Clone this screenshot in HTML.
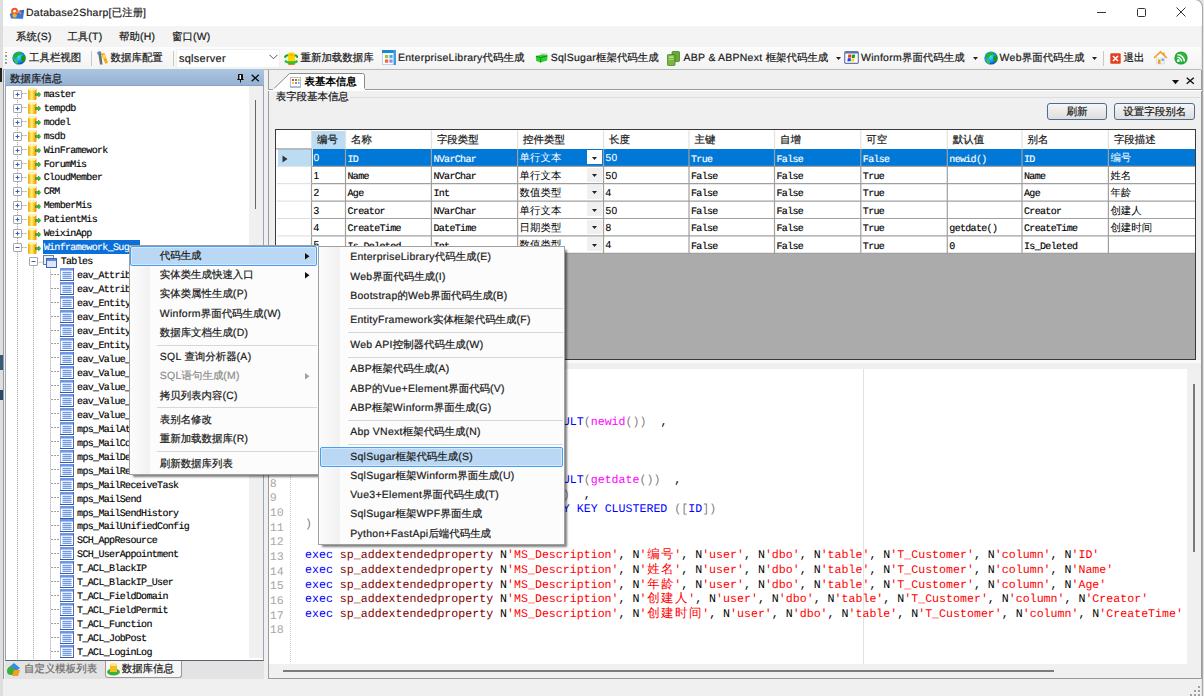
<!DOCTYPE html><html><head><meta charset="utf-8"><style>
html,body{margin:0;padding:0;}
body{width:1204px;height:696px;overflow:hidden;position:relative;background:#f0f0f0;font-family:"Liberation Sans",sans-serif;text-rendering:geometricPrecision;-webkit-text-stroke:0.2px currentColor;}
div,svg{position:absolute;box-sizing:border-box;}
</style></head><body>
<div style="left:0px;top:0px;width:3px;height:696px;background:#dedede;"></div>
<div style="left:2.5px;top:0px;width:1.2000000000000002px;height:696px;background:#9a9a9a;"></div>
<div style="left:0px;top:355px;width:2.5px;height:15px;background:#3a5a7a;"></div>
<div style="left:0px;top:390px;width:2.5px;height:10px;background:#2a4a6a;"></div>
<div style="left:0px;top:68px;width:2px;height:14px;background:#222;"></div>
<div style="left:1201px;top:0px;width:3px;height:696px;background:#e4e4e4;"></div>
<div style="left:3px;top:0px;width:1199px;height:26px;background:#fff;border-top-right-radius:8px;"></div>
<svg style="left:9px;top:7px" width="16" height="13" viewBox="0 0 16 13"><path d="M0.8 6.6 L5 6 L11 3.2 L15.2 2.8 L14 11.8 L2 11.4 Z" fill="#2a6ad8"/><path d="M2 7.5 L13.8 6 L13.4 11 L2.6 11Z" fill="#3a80e8" opacity="0.6"/><circle cx="5.6" cy="4.2" r="2.5" fill="none" stroke="#f45424" stroke-width="2"/><path d="M7 5.2 Q10.5 3.8 12 6.8" stroke="#f58a30" stroke-width="2" fill="none"/><circle cx="5.6" cy="8.6" r="2.2" fill="#f0b020"/></svg>
<div style="left:26px;top:7.0px;height:14px;line-height:14px;font-size:10.44px;font-family:'Liberation Sans', sans-serif;color:#1a1a1a;white-space:nowrap;"><span style="letter-spacing:0.3px">Database2Sharp[</span>已注册<span style="letter-spacing:0.3px">]</span></div>
<div style="left:1097px;top:11.5px;width:9px;height:1.0px;background:#333;"></div>
<div style="left:1137px;top:7.5px;width:9px;height:9.0px;border:1px solid #333;border-radius:1.5px;"></div>
<svg style="left:1176px;top:7px" width="10" height="10" viewBox="0 0 10 10"><path d="M0.5 0.5 L9.5 9.5 M9.5 0.5 L0.5 9.5" stroke="#333" stroke-width="1"/></svg>
<div style="left:3px;top:26px;width:1198px;height:21px;background:#f4f4f4;"></div>
<div style="left:16px;top:31.299999999999997px;height:14px;line-height:14px;font-size:10.44px;font-family:'Liberation Sans', sans-serif;color:#1a1a1a;white-space:nowrap;">系统<span style="letter-spacing:0.3px">(S)</span></div>
<div style="left:67.4px;top:31.299999999999997px;height:14px;line-height:14px;font-size:10.44px;font-family:'Liberation Sans', sans-serif;color:#1a1a1a;white-space:nowrap;">工具<span style="letter-spacing:0.3px">(T)</span></div>
<div style="left:119px;top:31.299999999999997px;height:14px;line-height:14px;font-size:10.44px;font-family:'Liberation Sans', sans-serif;color:#1a1a1a;white-space:nowrap;">帮助<span style="letter-spacing:0.3px">(H)</span></div>
<div style="left:172px;top:31.299999999999997px;height:14px;line-height:14px;font-size:10.44px;font-family:'Liberation Sans', sans-serif;color:#1a1a1a;white-space:nowrap;">窗口<span style="letter-spacing:0.3px">(W)</span></div>
<div style="left:3px;top:47px;width:1198px;height:22.5px;background:linear-gradient(#fcfcfc,#f3f3f3);border-bottom:1px solid #b9b9b9;"></div>
<div style="left:5px;top:51.5px;width:2px;height:1.6000000000000014px;background:#9a9a9a;"></div>
<div style="left:5px;top:55px;width:2px;height:1.6000000000000014px;background:#9a9a9a;"></div>
<div style="left:5px;top:58.5px;width:2px;height:1.6000000000000014px;background:#9a9a9a;"></div>
<div style="left:5px;top:62px;width:2px;height:1.6000000000000014px;background:#9a9a9a;"></div>
<svg style="left:12px;top:51px" width="14" height="14" viewBox="0 0 14 14"><defs><radialGradient id="gb1" cx="0.45" cy="0.4" r="0.65"><stop offset="0" stop-color="#40e4ff"/><stop offset="0.55" stop-color="#1a96f0"/><stop offset="1" stop-color="#0c2cc8"/></radialGradient></defs><circle cx="7" cy="7" r="6.6" fill="url(#gb1)"/><path d="M2.6 3 Q6 0.2 10.2 1.6 L9.4 3.8 L6.4 4.6 L4.4 7.6 L1.2 6.6 Q1.2 4.6 2.6 3Z" fill="#22b422"/><path d="M9.6 5 L13.2 4.2 Q14 7 13.2 10.2 L10.6 11.2 L9 8.2Z" fill="#159a15"/><path d="M1.2 8 L4 8.4 L6.2 11.2 L5.2 13.4 Q2.2 11.8 1.2 8Z" fill="#34cc34"/></svg>
<div style="left:29px;top:52.0px;height:14px;line-height:14px;font-size:10.44px;font-family:'Liberation Sans', sans-serif;color:#1a1a1a;white-space:nowrap;">工具栏视图</div>
<div style="left:90.5px;top:51px;width:1.0px;height:15px;background:#c8c8c8;"></div>
<svg style="left:96px;top:50px" width="13" height="16" viewBox="0 0 13 16"><path d="M2 2 L5 1.5 L6.5 14.5 L4 14.5Z" fill="#6a7078"/><path d="M1 2.5 L3.5 1 L4.5 4 L2 5Z" fill="#5a8ac0"/><path d="M5 3.5 L8.5 3 L12 12.5 L9.5 14 Z" fill="#f4a818"/><path d="M6.5 5 L9 4.8 L10 8 L7.5 8.5Z" fill="#ffe040"/></svg>
<div style="left:110.6px;top:52.0px;height:14px;line-height:14px;font-size:10.44px;font-family:'Liberation Sans', sans-serif;color:#1a1a1a;white-space:nowrap;">数据库配置</div>
<div style="left:173px;top:51px;width:1px;height:15px;background:#c8c8c8;"></div>
<div style="left:176.3px;top:48.7px;width:103.5px;height:19.299999999999997px;background:#fff;border:1px solid #f0f0f0;"></div>
<div style="left:179px;top:52.0px;height:14px;line-height:14px;font-size:10.9px;font-family:'Liberation Sans', sans-serif;color:#1a1a1a;white-space:nowrap;"><span style="letter-spacing:0.3px">sqlserver</span></div>
<svg style="left:269px;top:54px" width="9" height="6" viewBox="0 0 9 6"><path d="M0.5 0.8 L4.5 4.8 L8.5 0.8" stroke="#555" stroke-width="1" fill="none"/></svg>
<svg style="left:284px;top:51px" width="14" height="15" viewBox="0 0 14 15"><rect x="4" y="1.5" width="7" height="10" rx="1.8" fill="#ffd400"/><rect x="5.5" y="3.5" width="4" height="1" fill="#f09020"/><rect x="4" y="10.5" width="7" height="3.5" rx="1" fill="#e8801a"/><path d="M0.8 6.8 Q1.5 4 4.2 4.2" stroke="#18a818" stroke-width="2" fill="none"/><path d="M10.8 4.2 Q13.4 4.6 13.6 7" stroke="#18a818" stroke-width="2" fill="none"/><path d="M0.8 10 Q7 13.6 13.6 10" stroke="#2ec02e" stroke-width="2.4" fill="none"/></svg>
<div style="left:300.5px;top:52.0px;height:14px;line-height:14px;font-size:10.44px;font-family:'Liberation Sans', sans-serif;color:#1a1a1a;white-space:nowrap;">重新加载数据库</div>
<svg style="left:382px;top:50px" width="14" height="15" viewBox="0 0 14 15"><rect x="0.5" y="0.5" width="13" height="14" fill="#fafcff" stroke="#b8c8d8" stroke-width="0.8"/><rect x="0" y="0" width="14" height="3" fill="#1a8ad8"/><rect x="11.5" y="0" width="2.5" height="15" fill="#3aa0e0"/><rect x="3" y="5" width="3.2" height="3.2" fill="#9ac838"/><rect x="7.4" y="5" width="3.2" height="3.2" fill="#40b0f0"/><rect x="3" y="9.5" width="3.2" height="3.2" fill="#f86030"/><rect x="7.4" y="9.5" width="3.2" height="3.2" fill="#a080f8"/></svg>
<div style="left:398px;top:52.0px;height:14px;line-height:14px;font-size:10.44px;font-family:'Liberation Sans', sans-serif;color:#1a1a1a;white-space:nowrap;"><span style="letter-spacing:0.3px">EnterpriseLibrary</span>代码生成</div>
<svg style="left:535px;top:52px" width="13" height="11" viewBox="0 0 13 11"><path d="M5 1.5 L12 1.2 L12.5 3 L6 3.5Z" fill="#c8d0e8"/><path d="M0.8 4 L8 2.6 L12.5 3.6 L12.2 8.6 L5.6 10.6 L1.2 9Z" fill="#2ed02e"/><path d="M1 4.2 L5.6 5.6 L12.4 3.8" stroke="#0a8a0a" stroke-width="1" fill="none"/><path d="M5.6 5.6 L5.6 10.5" stroke="#0a9a0a" stroke-width="1"/></svg>
<div style="left:550.7px;top:52.0px;height:14px;line-height:14px;font-size:10.44px;font-family:'Liberation Sans', sans-serif;color:#1a1a1a;white-space:nowrap;"><span style="letter-spacing:0.3px">SqlSugar</span>框架代码生成</div>
<svg style="left:667px;top:51px" width="13" height="15" viewBox="0 0 13 15"><rect x="5" y="0.5" width="7.5" height="10" rx="0.8" fill="#6aa838" stroke="#3e7a18" stroke-width="0.7"/><rect x="0.5" y="3.5" width="7.5" height="11" rx="0.8" fill="#78b840" stroke="#3e7a18" stroke-width="0.7"/><rect x="2" y="5.5" width="4.5" height="1.2" fill="#d8ecc0"/><rect x="2" y="8" width="4.5" height="1" fill="#a8d088"/></svg>
<div style="left:683.6px;top:52.0px;height:14px;line-height:14px;font-size:10.44px;font-family:'Liberation Sans', sans-serif;color:#1a1a1a;white-space:nowrap;"><span style="letter-spacing:0.3px">ABP </span>&amp;<span style="letter-spacing:0.3px"> ABPNext </span>框架代码生成</div>
<svg style="left:836px;top:57px" width="5" height="3" viewBox="0 0 5 3"><path d="M0 0 L5 0 L2.5 3Z" fill="#222"/></svg>
<svg style="left:844px;top:51px" width="15" height="13" viewBox="0 0 15 13"><rect x="0.7" y="0.7" width="13.6" height="11.6" rx="1" fill="#fbfcff" stroke="#6a78a8" stroke-width="1.2"/><rect x="1" y="1" width="13" height="1.5" fill="#5a70b0"/><path d="M4.4 3.6 L7.4 3.4 L7 6.6 L4 6.8Z" fill="#f03a10"/><path d="M8 3.8 L11.2 3.6 L10.6 7 L7.6 7Z" fill="#10a020"/><path d="M3.8 7.2 L7 7.2 L6.6 10.2 L3.4 10.2Z" fill="#1040f0"/><path d="M7.6 7.4 L10.6 7.4 L10 10.6 L7 10.4Z" fill="#ffd800"/></svg>
<div style="left:861px;top:52.0px;height:14px;line-height:14px;font-size:10.44px;font-family:'Liberation Sans', sans-serif;color:#1a1a1a;white-space:nowrap;"><span style="letter-spacing:0.3px">Winform</span>界面代码生成</div>
<svg style="left:973px;top:57px" width="5" height="3" viewBox="0 0 5 3"><path d="M0 0 L5 0 L2.5 3Z" fill="#222"/></svg>
<svg style="left:984px;top:51px" width="14" height="14" viewBox="0 0 14 14"><defs><radialGradient id="gb2" cx="0.45" cy="0.4" r="0.65"><stop offset="0" stop-color="#40e4ff"/><stop offset="0.55" stop-color="#1a96f0"/><stop offset="1" stop-color="#0c2cc8"/></radialGradient></defs><circle cx="7" cy="7" r="6.6" fill="url(#gb2)"/><path d="M2.6 3 Q6 0.2 10.2 1.6 L9.4 3.8 L6.4 4.6 L4.4 7.6 L1.2 6.6 Q1.2 4.6 2.6 3Z" fill="#22b422"/><path d="M9.6 5 L13.2 4.2 Q14 7 13.2 10.2 L10.6 11.2 L9 8.2Z" fill="#159a15"/><path d="M1.2 8 L4 8.4 L6.2 11.2 L5.2 13.4 Q2.2 11.8 1.2 8Z" fill="#34cc34"/></svg>
<div style="left:999.6px;top:52.0px;height:14px;line-height:14px;font-size:10.44px;font-family:'Liberation Sans', sans-serif;color:#1a1a1a;white-space:nowrap;"><span style="letter-spacing:0.3px">Web</span>界面代码生成</div>
<svg style="left:1092px;top:57px" width="5" height="3" viewBox="0 0 5 3"><path d="M0 0 L5 0 L2.5 3Z" fill="#222"/></svg>
<div style="left:1103px;top:51px;width:1px;height:15px;background:#c8c8c8;"></div>
<svg style="left:1110px;top:53px" width="11" height="11" viewBox="0 0 11 11"><rect x="0.3" y="0.3" width="10.4" height="10.4" rx="1.2" fill="#e24020"/><path d="M3 3 L8 8 M8 3 L3 8" stroke="#fff" stroke-width="1.6"/></svg>
<div style="left:1123.6px;top:52.0px;height:14px;line-height:14px;font-size:10.44px;font-family:'Liberation Sans', sans-serif;color:#1a1a1a;white-space:nowrap;">退出</div>
<svg style="left:1153px;top:50px" width="15" height="15" viewBox="0 0 15 15"><path d="M3.5 7 L3.5 13.8 L11.5 13.8 L11.5 7" fill="#f0f0f0" stroke="#d8d8d8" stroke-width="0.8"/><path d="M1 8 L7.5 1.8 L14 8" stroke="#f0a020" stroke-width="1.6" fill="none"/><rect x="10.2" y="2.5" width="1.5" height="3" fill="#f0a020"/><rect x="5" y="9.5" width="2.5" height="4.3" fill="#f0a020"/><rect x="8.6" y="8.6" width="2.2" height="2.2" fill="#40b0f8"/></svg>
<svg style="left:1174px;top:51px" width="14" height="14" viewBox="0 0 14 14"><circle cx="7" cy="7" r="6.6" fill="#24a83a"/><circle cx="7" cy="6.5" r="5" fill="#36c04a" opacity="0.6"/><circle cx="4.3" cy="9.7" r="1.4" fill="#fff"/><path d="M3.4 6.4 A4.2 4.2 0 0 1 7.6 10.6 M3.4 3.6 A7 7 0 0 1 10.4 10.6" stroke="#fff" stroke-width="1.4" fill="none"/></svg>
<div style="left:5px;top:69px;width:259px;height:16.5px;background:linear-gradient(#abc5e1,#97b2d2);border-bottom:1px solid #87a2c4;"></div>
<div style="left:10px;top:72.5px;height:14px;line-height:14px;font-size:10.44px;font-family:'Liberation Sans', sans-serif;color:#1a1a1a;white-space:nowrap;">数据库信息</div>
<svg style="left:237px;top:74px" width="7" height="9" viewBox="0 0 7 9"><path d="M1.5 0.5 L5.5 0.5 L5.5 5 L6.5 5.5 L0.5 5.5 L1.5 5Z M3.5 5.5 L3.5 8.5" stroke="#111" stroke-width="1" fill="#111"/><rect x="2.5" y="1" width="1.5" height="4" fill="#fff"/></svg>
<svg style="left:251px;top:74px" width="8.5" height="8" viewBox="0 0 8.5 8"><path d="M0.7 0.7 L7.8 7.3 M7.8 0.7 L0.7 7.3" stroke="#111" stroke-width="1.4"/></svg>
<div style="left:5px;top:85.5px;width:259px;height:575.7px;background:#fff;border:1px solid #9aa4b4;border-top:none;border-bottom:1.6px solid #5c6270;"></div>
<div style="left:249px;top:86px;width:14px;height:572px;background:#f0f0f0;"></div>
<div style="left:254.8px;top:99.5px;width:1.3999999999999773px;height:109.0px;background:#666;"></div>
<svg style="left:0;top:0" width="264" height="660">
<path d="M17.5 94.2 V 659" stroke="#a0a0a0" stroke-width="1" stroke-dasharray="1 1"/>
<path d="M33.5 261.72 V 659" stroke="#a0a0a0" stroke-width="1" stroke-dasharray="1 1"/>
<path d="M50.5 269.68 V 659" stroke="#a0a0a0" stroke-width="1" stroke-dasharray="1 1"/>
<path d="M21.5 93.5 H 27" stroke="#a8a8a8" stroke-width="1" stroke-dasharray="2 1"/>
<path d="M21.5 107.5 H 27" stroke="#a8a8a8" stroke-width="1" stroke-dasharray="2 1"/>
<path d="M21.5 121.5 H 27" stroke="#a8a8a8" stroke-width="1" stroke-dasharray="2 1"/>
<path d="M21.5 135.5 H 27" stroke="#a8a8a8" stroke-width="1" stroke-dasharray="2 1"/>
<path d="M21.5 149.5 H 27" stroke="#a8a8a8" stroke-width="1" stroke-dasharray="2 1"/>
<path d="M21.5 163.5 H 27" stroke="#a8a8a8" stroke-width="1" stroke-dasharray="2 1"/>
<path d="M21.5 177.5 H 27" stroke="#a8a8a8" stroke-width="1" stroke-dasharray="2 1"/>
<path d="M21.5 191.5 H 27" stroke="#a8a8a8" stroke-width="1" stroke-dasharray="2 1"/>
<path d="M21.5 205.5 H 27" stroke="#a8a8a8" stroke-width="1" stroke-dasharray="2 1"/>
<path d="M21.5 219.5 H 27" stroke="#a8a8a8" stroke-width="1" stroke-dasharray="2 1"/>
<path d="M21.5 233.5 H 27" stroke="#a8a8a8" stroke-width="1" stroke-dasharray="2 1"/>
<path d="M21.5 247.5 H 27" stroke="#a8a8a8" stroke-width="1" stroke-dasharray="2 1"/>
<path d="M37.5 262.22 H 43" stroke="#a0a0a0" stroke-width="1" stroke-dasharray="1 1"/>
<path d="M51 274.5 H 59" stroke="#a0a0a0" stroke-width="1" stroke-dasharray="2 1"/>
<path d="M51 288.5 H 59" stroke="#a0a0a0" stroke-width="1" stroke-dasharray="2 1"/>
<path d="M51 302.5 H 59" stroke="#a0a0a0" stroke-width="1" stroke-dasharray="2 1"/>
<path d="M51 316.5 H 59" stroke="#a0a0a0" stroke-width="1" stroke-dasharray="2 1"/>
<path d="M51 330.5 H 59" stroke="#a0a0a0" stroke-width="1" stroke-dasharray="2 1"/>
<path d="M51 343.5 H 59" stroke="#a0a0a0" stroke-width="1" stroke-dasharray="2 1"/>
<path d="M51 357.5 H 59" stroke="#a0a0a0" stroke-width="1" stroke-dasharray="2 1"/>
<path d="M51 371.5 H 59" stroke="#a0a0a0" stroke-width="1" stroke-dasharray="2 1"/>
<path d="M51 385.5 H 59" stroke="#a0a0a0" stroke-width="1" stroke-dasharray="2 1"/>
<path d="M51 399.5 H 59" stroke="#a0a0a0" stroke-width="1" stroke-dasharray="2 1"/>
<path d="M51 413.5 H 59" stroke="#a0a0a0" stroke-width="1" stroke-dasharray="2 1"/>
<path d="M51 427.5 H 59" stroke="#a0a0a0" stroke-width="1" stroke-dasharray="2 1"/>
<path d="M51 441.5 H 59" stroke="#a0a0a0" stroke-width="1" stroke-dasharray="2 1"/>
<path d="M51 455.5 H 59" stroke="#a0a0a0" stroke-width="1" stroke-dasharray="2 1"/>
<path d="M51 469.5 H 59" stroke="#a0a0a0" stroke-width="1" stroke-dasharray="2 1"/>
<path d="M51 483.5 H 59" stroke="#a0a0a0" stroke-width="1" stroke-dasharray="2 1"/>
<path d="M51 497.5 H 59" stroke="#a0a0a0" stroke-width="1" stroke-dasharray="2 1"/>
<path d="M51 511.5 H 59" stroke="#a0a0a0" stroke-width="1" stroke-dasharray="2 1"/>
<path d="M51 525.5 H 59" stroke="#a0a0a0" stroke-width="1" stroke-dasharray="2 1"/>
<path d="M51 539.5 H 59" stroke="#a0a0a0" stroke-width="1" stroke-dasharray="2 1"/>
<path d="M51 553.5 H 59" stroke="#a0a0a0" stroke-width="1" stroke-dasharray="2 1"/>
<path d="M51 567.5 H 59" stroke="#a0a0a0" stroke-width="1" stroke-dasharray="2 1"/>
<path d="M51 581.5 H 59" stroke="#a0a0a0" stroke-width="1" stroke-dasharray="2 1"/>
<path d="M51 595.5 H 59" stroke="#a0a0a0" stroke-width="1" stroke-dasharray="2 1"/>
<path d="M51 609.5 H 59" stroke="#a0a0a0" stroke-width="1" stroke-dasharray="2 1"/>
<path d="M51 623.5 H 59" stroke="#a0a0a0" stroke-width="1" stroke-dasharray="2 1"/>
<path d="M51 637.5 H 59" stroke="#a0a0a0" stroke-width="1" stroke-dasharray="2 1"/>
<path d="M51 651.5 H 59" stroke="#a0a0a0" stroke-width="1" stroke-dasharray="2 1"/>
</svg>
<svg style="left:13px;top:90px" width="9" height="9" viewBox="0 0 9 9"><rect x="0.5" y="0.5" width="8" height="8" rx="0.5" fill="#fff" stroke="#a8a8a8" stroke-width="1"/><path d="M2.5 4.5 L6.5 4.5" stroke="#3a5fb0" stroke-width="1"/><path d="M4.5 2.5 L4.5 6.5" stroke="#3a5fb0" stroke-width="1"/></svg>
<svg style="left:27px;top:87px" width="14" height="14" viewBox="0 0 14 14"><defs><linearGradient id="gy" x1="0" x2="1"><stop offset="0" stop-color="#f0a800"/><stop offset="0.45" stop-color="#fff080"/><stop offset="0.7" stop-color="#f8c020"/><stop offset="1" stop-color="#e88800"/></linearGradient></defs><rect x="1" y="1.5" width="8.5" height="11.5" rx="1" fill="url(#gy)"/><ellipse cx="5.25" cy="2" rx="4.25" ry="1.5" fill="#fff2b0"/><path d="M8.5 6.5 L11.5 6.5 L11.5 5 L13.8 7.5 L11.5 10 L11.5 8.5 L8.5 8.5Z" fill="#3ab83a" stroke="#1e7e1e" stroke-width="0.5"/></svg>
<div style="left:43.7px;top:88.7px;height:14px;line-height:14px;font-size:10.0px;font-family:'Liberation Mono', monospace;color:#000;white-space:nowrap;letter-spacing:-0.67px;-webkit-text-stroke:0.15px currentColor;">master</div>
<svg style="left:13px;top:104px" width="9" height="9" viewBox="0 0 9 9"><rect x="0.5" y="0.5" width="8" height="8" rx="0.5" fill="#fff" stroke="#a8a8a8" stroke-width="1"/><path d="M2.5 4.5 L6.5 4.5" stroke="#3a5fb0" stroke-width="1"/><path d="M4.5 2.5 L4.5 6.5" stroke="#3a5fb0" stroke-width="1"/></svg>
<svg style="left:27px;top:101px" width="14" height="14" viewBox="0 0 14 14"><defs><linearGradient id="gy" x1="0" x2="1"><stop offset="0" stop-color="#f0a800"/><stop offset="0.45" stop-color="#fff080"/><stop offset="0.7" stop-color="#f8c020"/><stop offset="1" stop-color="#e88800"/></linearGradient></defs><rect x="1" y="1.5" width="8.5" height="11.5" rx="1" fill="url(#gy)"/><ellipse cx="5.25" cy="2" rx="4.25" ry="1.5" fill="#fff2b0"/><path d="M8.5 6.5 L11.5 6.5 L11.5 5 L13.8 7.5 L11.5 10 L11.5 8.5 L8.5 8.5Z" fill="#3ab83a" stroke="#1e7e1e" stroke-width="0.5"/></svg>
<div style="left:43.7px;top:102.66px;height:14px;line-height:14px;font-size:10.0px;font-family:'Liberation Mono', monospace;color:#000;white-space:nowrap;letter-spacing:-0.67px;-webkit-text-stroke:0.15px currentColor;">tempdb</div>
<svg style="left:13px;top:118px" width="9" height="9" viewBox="0 0 9 9"><rect x="0.5" y="0.5" width="8" height="8" rx="0.5" fill="#fff" stroke="#a8a8a8" stroke-width="1"/><path d="M2.5 4.5 L6.5 4.5" stroke="#3a5fb0" stroke-width="1"/><path d="M4.5 2.5 L4.5 6.5" stroke="#3a5fb0" stroke-width="1"/></svg>
<svg style="left:27px;top:115px" width="14" height="14" viewBox="0 0 14 14"><defs><linearGradient id="gy" x1="0" x2="1"><stop offset="0" stop-color="#f0a800"/><stop offset="0.45" stop-color="#fff080"/><stop offset="0.7" stop-color="#f8c020"/><stop offset="1" stop-color="#e88800"/></linearGradient></defs><rect x="1" y="1.5" width="8.5" height="11.5" rx="1" fill="url(#gy)"/><ellipse cx="5.25" cy="2" rx="4.25" ry="1.5" fill="#fff2b0"/><path d="M8.5 6.5 L11.5 6.5 L11.5 5 L13.8 7.5 L11.5 10 L11.5 8.5 L8.5 8.5Z" fill="#3ab83a" stroke="#1e7e1e" stroke-width="0.5"/></svg>
<div style="left:43.7px;top:116.62px;height:14px;line-height:14px;font-size:10.0px;font-family:'Liberation Mono', monospace;color:#000;white-space:nowrap;letter-spacing:-0.67px;-webkit-text-stroke:0.15px currentColor;">model</div>
<svg style="left:13px;top:132px" width="9" height="9" viewBox="0 0 9 9"><rect x="0.5" y="0.5" width="8" height="8" rx="0.5" fill="#fff" stroke="#a8a8a8" stroke-width="1"/><path d="M2.5 4.5 L6.5 4.5" stroke="#3a5fb0" stroke-width="1"/><path d="M4.5 2.5 L4.5 6.5" stroke="#3a5fb0" stroke-width="1"/></svg>
<svg style="left:27px;top:129px" width="14" height="14" viewBox="0 0 14 14"><defs><linearGradient id="gy" x1="0" x2="1"><stop offset="0" stop-color="#f0a800"/><stop offset="0.45" stop-color="#fff080"/><stop offset="0.7" stop-color="#f8c020"/><stop offset="1" stop-color="#e88800"/></linearGradient></defs><rect x="1" y="1.5" width="8.5" height="11.5" rx="1" fill="url(#gy)"/><ellipse cx="5.25" cy="2" rx="4.25" ry="1.5" fill="#fff2b0"/><path d="M8.5 6.5 L11.5 6.5 L11.5 5 L13.8 7.5 L11.5 10 L11.5 8.5 L8.5 8.5Z" fill="#3ab83a" stroke="#1e7e1e" stroke-width="0.5"/></svg>
<div style="left:43.7px;top:130.58px;height:14px;line-height:14px;font-size:10.0px;font-family:'Liberation Mono', monospace;color:#000;white-space:nowrap;letter-spacing:-0.67px;-webkit-text-stroke:0.15px currentColor;">msdb</div>
<svg style="left:13px;top:146px" width="9" height="9" viewBox="0 0 9 9"><rect x="0.5" y="0.5" width="8" height="8" rx="0.5" fill="#fff" stroke="#a8a8a8" stroke-width="1"/><path d="M2.5 4.5 L6.5 4.5" stroke="#3a5fb0" stroke-width="1"/><path d="M4.5 2.5 L4.5 6.5" stroke="#3a5fb0" stroke-width="1"/></svg>
<svg style="left:27px;top:143px" width="14" height="14" viewBox="0 0 14 14"><defs><linearGradient id="gy" x1="0" x2="1"><stop offset="0" stop-color="#f0a800"/><stop offset="0.45" stop-color="#fff080"/><stop offset="0.7" stop-color="#f8c020"/><stop offset="1" stop-color="#e88800"/></linearGradient></defs><rect x="1" y="1.5" width="8.5" height="11.5" rx="1" fill="url(#gy)"/><ellipse cx="5.25" cy="2" rx="4.25" ry="1.5" fill="#fff2b0"/><path d="M8.5 6.5 L11.5 6.5 L11.5 5 L13.8 7.5 L11.5 10 L11.5 8.5 L8.5 8.5Z" fill="#3ab83a" stroke="#1e7e1e" stroke-width="0.5"/></svg>
<div style="left:43.7px;top:144.54000000000002px;height:14px;line-height:14px;font-size:10.0px;font-family:'Liberation Mono', monospace;color:#000;white-space:nowrap;letter-spacing:-0.67px;-webkit-text-stroke:0.15px currentColor;">WinFramework</div>
<svg style="left:13px;top:160px" width="9" height="9" viewBox="0 0 9 9"><rect x="0.5" y="0.5" width="8" height="8" rx="0.5" fill="#fff" stroke="#a8a8a8" stroke-width="1"/><path d="M2.5 4.5 L6.5 4.5" stroke="#3a5fb0" stroke-width="1"/><path d="M4.5 2.5 L4.5 6.5" stroke="#3a5fb0" stroke-width="1"/></svg>
<svg style="left:27px;top:157px" width="14" height="14" viewBox="0 0 14 14"><defs><linearGradient id="gy" x1="0" x2="1"><stop offset="0" stop-color="#f0a800"/><stop offset="0.45" stop-color="#fff080"/><stop offset="0.7" stop-color="#f8c020"/><stop offset="1" stop-color="#e88800"/></linearGradient></defs><rect x="1" y="1.5" width="8.5" height="11.5" rx="1" fill="url(#gy)"/><ellipse cx="5.25" cy="2" rx="4.25" ry="1.5" fill="#fff2b0"/><path d="M8.5 6.5 L11.5 6.5 L11.5 5 L13.8 7.5 L11.5 10 L11.5 8.5 L8.5 8.5Z" fill="#3ab83a" stroke="#1e7e1e" stroke-width="0.5"/></svg>
<div style="left:43.7px;top:158.5px;height:14px;line-height:14px;font-size:10.0px;font-family:'Liberation Mono', monospace;color:#000;white-space:nowrap;letter-spacing:-0.67px;-webkit-text-stroke:0.15px currentColor;">ForumMis</div>
<svg style="left:13px;top:173px" width="9" height="9" viewBox="0 0 9 9"><rect x="0.5" y="0.5" width="8" height="8" rx="0.5" fill="#fff" stroke="#a8a8a8" stroke-width="1"/><path d="M2.5 4.5 L6.5 4.5" stroke="#3a5fb0" stroke-width="1"/><path d="M4.5 2.5 L4.5 6.5" stroke="#3a5fb0" stroke-width="1"/></svg>
<svg style="left:27px;top:171px" width="14" height="14" viewBox="0 0 14 14"><defs><linearGradient id="gy" x1="0" x2="1"><stop offset="0" stop-color="#f0a800"/><stop offset="0.45" stop-color="#fff080"/><stop offset="0.7" stop-color="#f8c020"/><stop offset="1" stop-color="#e88800"/></linearGradient></defs><rect x="1" y="1.5" width="8.5" height="11.5" rx="1" fill="url(#gy)"/><ellipse cx="5.25" cy="2" rx="4.25" ry="1.5" fill="#fff2b0"/><path d="M8.5 6.5 L11.5 6.5 L11.5 5 L13.8 7.5 L11.5 10 L11.5 8.5 L8.5 8.5Z" fill="#3ab83a" stroke="#1e7e1e" stroke-width="0.5"/></svg>
<div style="left:43.7px;top:172.46px;height:14px;line-height:14px;font-size:10.0px;font-family:'Liberation Mono', monospace;color:#000;white-space:nowrap;letter-spacing:-0.67px;-webkit-text-stroke:0.15px currentColor;">CloudMember</div>
<svg style="left:13px;top:187px" width="9" height="9" viewBox="0 0 9 9"><rect x="0.5" y="0.5" width="8" height="8" rx="0.5" fill="#fff" stroke="#a8a8a8" stroke-width="1"/><path d="M2.5 4.5 L6.5 4.5" stroke="#3a5fb0" stroke-width="1"/><path d="M4.5 2.5 L4.5 6.5" stroke="#3a5fb0" stroke-width="1"/></svg>
<svg style="left:27px;top:185px" width="14" height="14" viewBox="0 0 14 14"><defs><linearGradient id="gy" x1="0" x2="1"><stop offset="0" stop-color="#f0a800"/><stop offset="0.45" stop-color="#fff080"/><stop offset="0.7" stop-color="#f8c020"/><stop offset="1" stop-color="#e88800"/></linearGradient></defs><rect x="1" y="1.5" width="8.5" height="11.5" rx="1" fill="url(#gy)"/><ellipse cx="5.25" cy="2" rx="4.25" ry="1.5" fill="#fff2b0"/><path d="M8.5 6.5 L11.5 6.5 L11.5 5 L13.8 7.5 L11.5 10 L11.5 8.5 L8.5 8.5Z" fill="#3ab83a" stroke="#1e7e1e" stroke-width="0.5"/></svg>
<div style="left:43.7px;top:186.42000000000002px;height:14px;line-height:14px;font-size:10.0px;font-family:'Liberation Mono', monospace;color:#000;white-space:nowrap;letter-spacing:-0.67px;-webkit-text-stroke:0.15px currentColor;">CRM</div>
<svg style="left:13px;top:201px" width="9" height="9" viewBox="0 0 9 9"><rect x="0.5" y="0.5" width="8" height="8" rx="0.5" fill="#fff" stroke="#a8a8a8" stroke-width="1"/><path d="M2.5 4.5 L6.5 4.5" stroke="#3a5fb0" stroke-width="1"/><path d="M4.5 2.5 L4.5 6.5" stroke="#3a5fb0" stroke-width="1"/></svg>
<svg style="left:27px;top:199px" width="14" height="14" viewBox="0 0 14 14"><defs><linearGradient id="gy" x1="0" x2="1"><stop offset="0" stop-color="#f0a800"/><stop offset="0.45" stop-color="#fff080"/><stop offset="0.7" stop-color="#f8c020"/><stop offset="1" stop-color="#e88800"/></linearGradient></defs><rect x="1" y="1.5" width="8.5" height="11.5" rx="1" fill="url(#gy)"/><ellipse cx="5.25" cy="2" rx="4.25" ry="1.5" fill="#fff2b0"/><path d="M8.5 6.5 L11.5 6.5 L11.5 5 L13.8 7.5 L11.5 10 L11.5 8.5 L8.5 8.5Z" fill="#3ab83a" stroke="#1e7e1e" stroke-width="0.5"/></svg>
<div style="left:43.7px;top:200.38px;height:14px;line-height:14px;font-size:10.0px;font-family:'Liberation Mono', monospace;color:#000;white-space:nowrap;letter-spacing:-0.67px;-webkit-text-stroke:0.15px currentColor;">MemberMis</div>
<svg style="left:13px;top:215px" width="9" height="9" viewBox="0 0 9 9"><rect x="0.5" y="0.5" width="8" height="8" rx="0.5" fill="#fff" stroke="#a8a8a8" stroke-width="1"/><path d="M2.5 4.5 L6.5 4.5" stroke="#3a5fb0" stroke-width="1"/><path d="M4.5 2.5 L4.5 6.5" stroke="#3a5fb0" stroke-width="1"/></svg>
<svg style="left:27px;top:213px" width="14" height="14" viewBox="0 0 14 14"><defs><linearGradient id="gy" x1="0" x2="1"><stop offset="0" stop-color="#f0a800"/><stop offset="0.45" stop-color="#fff080"/><stop offset="0.7" stop-color="#f8c020"/><stop offset="1" stop-color="#e88800"/></linearGradient></defs><rect x="1" y="1.5" width="8.5" height="11.5" rx="1" fill="url(#gy)"/><ellipse cx="5.25" cy="2" rx="4.25" ry="1.5" fill="#fff2b0"/><path d="M8.5 6.5 L11.5 6.5 L11.5 5 L13.8 7.5 L11.5 10 L11.5 8.5 L8.5 8.5Z" fill="#3ab83a" stroke="#1e7e1e" stroke-width="0.5"/></svg>
<div style="left:43.7px;top:214.34000000000003px;height:14px;line-height:14px;font-size:10.0px;font-family:'Liberation Mono', monospace;color:#000;white-space:nowrap;letter-spacing:-0.67px;-webkit-text-stroke:0.15px currentColor;">PatientMis</div>
<svg style="left:13px;top:229px" width="9" height="9" viewBox="0 0 9 9"><rect x="0.5" y="0.5" width="8" height="8" rx="0.5" fill="#fff" stroke="#a8a8a8" stroke-width="1"/><path d="M2.5 4.5 L6.5 4.5" stroke="#3a5fb0" stroke-width="1"/><path d="M4.5 2.5 L4.5 6.5" stroke="#3a5fb0" stroke-width="1"/></svg>
<svg style="left:27px;top:227px" width="14" height="14" viewBox="0 0 14 14"><defs><linearGradient id="gy" x1="0" x2="1"><stop offset="0" stop-color="#f0a800"/><stop offset="0.45" stop-color="#fff080"/><stop offset="0.7" stop-color="#f8c020"/><stop offset="1" stop-color="#e88800"/></linearGradient></defs><rect x="1" y="1.5" width="8.5" height="11.5" rx="1" fill="url(#gy)"/><ellipse cx="5.25" cy="2" rx="4.25" ry="1.5" fill="#fff2b0"/><path d="M8.5 6.5 L11.5 6.5 L11.5 5 L13.8 7.5 L11.5 10 L11.5 8.5 L8.5 8.5Z" fill="#3ab83a" stroke="#1e7e1e" stroke-width="0.5"/></svg>
<div style="left:43.7px;top:228.3px;height:14px;line-height:14px;font-size:10.0px;font-family:'Liberation Mono', monospace;color:#000;white-space:nowrap;letter-spacing:-0.67px;-webkit-text-stroke:0.15px currentColor;">WeixinApp</div>
<svg style="left:13px;top:243px" width="9" height="9" viewBox="0 0 9 9"><rect x="0.5" y="0.5" width="8" height="8" rx="0.5" fill="#fff" stroke="#a8a8a8" stroke-width="1"/><path d="M2.5 4.5 L6.5 4.5" stroke="#3a5fb0" stroke-width="1"/></svg>
<svg style="left:27px;top:241px" width="14" height="14" viewBox="0 0 14 14"><defs><linearGradient id="gy" x1="0" x2="1"><stop offset="0" stop-color="#f0a800"/><stop offset="0.45" stop-color="#fff080"/><stop offset="0.7" stop-color="#f8c020"/><stop offset="1" stop-color="#e88800"/></linearGradient></defs><rect x="1" y="1.5" width="8.5" height="11.5" rx="1" fill="url(#gy)"/><ellipse cx="5.25" cy="2" rx="4.25" ry="1.5" fill="#fff2b0"/><path d="M8.5 6.5 L11.5 6.5 L11.5 5 L13.8 7.5 L11.5 10 L11.5 8.5 L8.5 8.5Z" fill="#3ab83a" stroke="#1e7e1e" stroke-width="0.5"/></svg>
<div style="left:43px;top:240px;width:97px;height:14px;background:#0a6fd8;"></div>
<div style="left:43.7px;top:242.26px;height:14px;line-height:14px;font-size:10.0px;font-family:'Liberation Mono', monospace;color:#fff;white-space:nowrap;letter-spacing:-0.67px;-webkit-text-stroke:0.15px currentColor;">Winframework_Sug</div>
<svg style="left:29px;top:257px" width="9" height="9" viewBox="0 0 9 9"><rect x="0.5" y="0.5" width="8" height="8" rx="0.5" fill="#fff" stroke="#a8a8a8" stroke-width="1"/><path d="M2.5 4.5 L6.5 4.5" stroke="#3a5fb0" stroke-width="1"/></svg>
<svg style="left:43px;top:255px" width="15" height="14" viewBox="0 0 15 14"><rect x="0.5" y="0.5" width="10" height="9" fill="#e8eef8" stroke="#6a7fa8"/><rect x="3.5" y="3.5" width="10" height="9" fill="#dce6f6" stroke="#3a64b8"/><rect x="4" y="4" width="9" height="2" fill="#5a88d8"/></svg>
<div style="left:60.7px;top:256.22px;height:14px;line-height:14px;font-size:10.0px;font-family:'Liberation Mono', monospace;color:#000;white-space:nowrap;letter-spacing:-0.67px;-webkit-text-stroke:0.15px currentColor;">Tables</div>
<svg style="left:60px;top:268px" width="14" height="13" viewBox="0 0 14 13"><rect x="0.5" y="0.5" width="13" height="12" fill="#fff" stroke="#98acd8" stroke-width="1"/><rect x="0" y="0" width="14" height="2.6" fill="#6c96e6"/><rect x="0" y="12" width="14" height="1" fill="#3a58a8"/><rect x="13" y="0" width="1" height="13" fill="#4a68b8"/><rect x="2.5" y="3.5" width="9" height="7.5" fill="#d0def8"/><path d="M2.5 4.5 H11.5 M2.5 6.5 H11.5 M2.5 8.5 H11.5 M2.5 10.5 H11.5" stroke="#7098e4" stroke-width="1"/></svg>
<div style="left:77.1px;top:270.18px;height:14px;line-height:14px;font-size:10.0px;font-family:'Liberation Mono', monospace;color:#000;white-space:nowrap;letter-spacing:-0.67px;-webkit-text-stroke:0.15px currentColor;">eav_Attribute</div>
<svg style="left:60px;top:282px" width="14" height="13" viewBox="0 0 14 13"><rect x="0.5" y="0.5" width="13" height="12" fill="#fff" stroke="#98acd8" stroke-width="1"/><rect x="0" y="0" width="14" height="2.6" fill="#6c96e6"/><rect x="0" y="12" width="14" height="1" fill="#3a58a8"/><rect x="13" y="0" width="1" height="13" fill="#4a68b8"/><rect x="2.5" y="3.5" width="9" height="7.5" fill="#d0def8"/><path d="M2.5 4.5 H11.5 M2.5 6.5 H11.5 M2.5 8.5 H11.5 M2.5 10.5 H11.5" stroke="#7098e4" stroke-width="1"/></svg>
<div style="left:77.1px;top:284.14px;height:14px;line-height:14px;font-size:10.0px;font-family:'Liberation Mono', monospace;color:#000;white-space:nowrap;letter-spacing:-0.67px;-webkit-text-stroke:0.15px currentColor;">eav_AttributeGroup</div>
<svg style="left:60px;top:296px" width="14" height="13" viewBox="0 0 14 13"><rect x="0.5" y="0.5" width="13" height="12" fill="#fff" stroke="#98acd8" stroke-width="1"/><rect x="0" y="0" width="14" height="2.6" fill="#6c96e6"/><rect x="0" y="12" width="14" height="1" fill="#3a58a8"/><rect x="13" y="0" width="1" height="13" fill="#4a68b8"/><rect x="2.5" y="3.5" width="9" height="7.5" fill="#d0def8"/><path d="M2.5 4.5 H11.5 M2.5 6.5 H11.5 M2.5 8.5 H11.5 M2.5 10.5 H11.5" stroke="#7098e4" stroke-width="1"/></svg>
<div style="left:77.1px;top:298.1px;height:14px;line-height:14px;font-size:10.0px;font-family:'Liberation Mono', monospace;color:#000;white-space:nowrap;letter-spacing:-0.67px;-webkit-text-stroke:0.15px currentColor;">eav_Entity</div>
<svg style="left:60px;top:310px" width="14" height="13" viewBox="0 0 14 13"><rect x="0.5" y="0.5" width="13" height="12" fill="#fff" stroke="#98acd8" stroke-width="1"/><rect x="0" y="0" width="14" height="2.6" fill="#6c96e6"/><rect x="0" y="12" width="14" height="1" fill="#3a58a8"/><rect x="13" y="0" width="1" height="13" fill="#4a68b8"/><rect x="2.5" y="3.5" width="9" height="7.5" fill="#d0def8"/><path d="M2.5 4.5 H11.5 M2.5 6.5 H11.5 M2.5 8.5 H11.5 M2.5 10.5 H11.5" stroke="#7098e4" stroke-width="1"/></svg>
<div style="left:77.1px;top:312.06px;height:14px;line-height:14px;font-size:10.0px;font-family:'Liberation Mono', monospace;color:#000;white-space:nowrap;letter-spacing:-0.67px;-webkit-text-stroke:0.15px currentColor;">eav_EntityAttribute</div>
<svg style="left:60px;top:324px" width="14" height="13" viewBox="0 0 14 13"><rect x="0.5" y="0.5" width="13" height="12" fill="#fff" stroke="#98acd8" stroke-width="1"/><rect x="0" y="0" width="14" height="2.6" fill="#6c96e6"/><rect x="0" y="12" width="14" height="1" fill="#3a58a8"/><rect x="13" y="0" width="1" height="13" fill="#4a68b8"/><rect x="2.5" y="3.5" width="9" height="7.5" fill="#d0def8"/><path d="M2.5 4.5 H11.5 M2.5 6.5 H11.5 M2.5 8.5 H11.5 M2.5 10.5 H11.5" stroke="#7098e4" stroke-width="1"/></svg>
<div style="left:77.1px;top:326.02000000000004px;height:14px;line-height:14px;font-size:10.0px;font-family:'Liberation Mono', monospace;color:#000;white-space:nowrap;letter-spacing:-0.67px;-webkit-text-stroke:0.15px currentColor;">eav_EntityType</div>
<svg style="left:60px;top:338px" width="14" height="13" viewBox="0 0 14 13"><rect x="0.5" y="0.5" width="13" height="12" fill="#fff" stroke="#98acd8" stroke-width="1"/><rect x="0" y="0" width="14" height="2.6" fill="#6c96e6"/><rect x="0" y="12" width="14" height="1" fill="#3a58a8"/><rect x="13" y="0" width="1" height="13" fill="#4a68b8"/><rect x="2.5" y="3.5" width="9" height="7.5" fill="#d0def8"/><path d="M2.5 4.5 H11.5 M2.5 6.5 H11.5 M2.5 8.5 H11.5 M2.5 10.5 H11.5" stroke="#7098e4" stroke-width="1"/></svg>
<div style="left:77.1px;top:339.98px;height:14px;line-height:14px;font-size:10.0px;font-family:'Liberation Mono', monospace;color:#000;white-space:nowrap;letter-spacing:-0.67px;-webkit-text-stroke:0.15px currentColor;">eav_EntityValue</div>
<svg style="left:60px;top:352px" width="14" height="13" viewBox="0 0 14 13"><rect x="0.5" y="0.5" width="13" height="12" fill="#fff" stroke="#98acd8" stroke-width="1"/><rect x="0" y="0" width="14" height="2.6" fill="#6c96e6"/><rect x="0" y="12" width="14" height="1" fill="#3a58a8"/><rect x="13" y="0" width="1" height="13" fill="#4a68b8"/><rect x="2.5" y="3.5" width="9" height="7.5" fill="#d0def8"/><path d="M2.5 4.5 H11.5 M2.5 6.5 H11.5 M2.5 8.5 H11.5 M2.5 10.5 H11.5" stroke="#7098e4" stroke-width="1"/></svg>
<div style="left:77.1px;top:353.94px;height:14px;line-height:14px;font-size:10.0px;font-family:'Liberation Mono', monospace;color:#000;white-space:nowrap;letter-spacing:-0.67px;-webkit-text-stroke:0.15px currentColor;">eav_Value_Datetime</div>
<svg style="left:60px;top:366px" width="14" height="13" viewBox="0 0 14 13"><rect x="0.5" y="0.5" width="13" height="12" fill="#fff" stroke="#98acd8" stroke-width="1"/><rect x="0" y="0" width="14" height="2.6" fill="#6c96e6"/><rect x="0" y="12" width="14" height="1" fill="#3a58a8"/><rect x="13" y="0" width="1" height="13" fill="#4a68b8"/><rect x="2.5" y="3.5" width="9" height="7.5" fill="#d0def8"/><path d="M2.5 4.5 H11.5 M2.5 6.5 H11.5 M2.5 8.5 H11.5 M2.5 10.5 H11.5" stroke="#7098e4" stroke-width="1"/></svg>
<div style="left:77.1px;top:367.90000000000003px;height:14px;line-height:14px;font-size:10.0px;font-family:'Liberation Mono', monospace;color:#000;white-space:nowrap;letter-spacing:-0.67px;-webkit-text-stroke:0.15px currentColor;">eav_Value_Decimal</div>
<svg style="left:60px;top:380px" width="14" height="13" viewBox="0 0 14 13"><rect x="0.5" y="0.5" width="13" height="12" fill="#fff" stroke="#98acd8" stroke-width="1"/><rect x="0" y="0" width="14" height="2.6" fill="#6c96e6"/><rect x="0" y="12" width="14" height="1" fill="#3a58a8"/><rect x="13" y="0" width="1" height="13" fill="#4a68b8"/><rect x="2.5" y="3.5" width="9" height="7.5" fill="#d0def8"/><path d="M2.5 4.5 H11.5 M2.5 6.5 H11.5 M2.5 8.5 H11.5 M2.5 10.5 H11.5" stroke="#7098e4" stroke-width="1"/></svg>
<div style="left:77.1px;top:381.86px;height:14px;line-height:14px;font-size:10.0px;font-family:'Liberation Mono', monospace;color:#000;white-space:nowrap;letter-spacing:-0.67px;-webkit-text-stroke:0.15px currentColor;">eav_Value_Int</div>
<svg style="left:60px;top:394px" width="14" height="13" viewBox="0 0 14 13"><rect x="0.5" y="0.5" width="13" height="12" fill="#fff" stroke="#98acd8" stroke-width="1"/><rect x="0" y="0" width="14" height="2.6" fill="#6c96e6"/><rect x="0" y="12" width="14" height="1" fill="#3a58a8"/><rect x="13" y="0" width="1" height="13" fill="#4a68b8"/><rect x="2.5" y="3.5" width="9" height="7.5" fill="#d0def8"/><path d="M2.5 4.5 H11.5 M2.5 6.5 H11.5 M2.5 8.5 H11.5 M2.5 10.5 H11.5" stroke="#7098e4" stroke-width="1"/></svg>
<div style="left:77.1px;top:395.82px;height:14px;line-height:14px;font-size:10.0px;font-family:'Liberation Mono', monospace;color:#000;white-space:nowrap;letter-spacing:-0.67px;-webkit-text-stroke:0.15px currentColor;">eav_Value_Text</div>
<svg style="left:60px;top:408px" width="14" height="13" viewBox="0 0 14 13"><rect x="0.5" y="0.5" width="13" height="12" fill="#fff" stroke="#98acd8" stroke-width="1"/><rect x="0" y="0" width="14" height="2.6" fill="#6c96e6"/><rect x="0" y="12" width="14" height="1" fill="#3a58a8"/><rect x="13" y="0" width="1" height="13" fill="#4a68b8"/><rect x="2.5" y="3.5" width="9" height="7.5" fill="#d0def8"/><path d="M2.5 4.5 H11.5 M2.5 6.5 H11.5 M2.5 8.5 H11.5 M2.5 10.5 H11.5" stroke="#7098e4" stroke-width="1"/></svg>
<div style="left:77.1px;top:409.78000000000003px;height:14px;line-height:14px;font-size:10.0px;font-family:'Liberation Mono', monospace;color:#000;white-space:nowrap;letter-spacing:-0.67px;-webkit-text-stroke:0.15px currentColor;">eav_Value_Varchar</div>
<svg style="left:60px;top:422px" width="14" height="13" viewBox="0 0 14 13"><rect x="0.5" y="0.5" width="13" height="12" fill="#fff" stroke="#98acd8" stroke-width="1"/><rect x="0" y="0" width="14" height="2.6" fill="#6c96e6"/><rect x="0" y="12" width="14" height="1" fill="#3a58a8"/><rect x="13" y="0" width="1" height="13" fill="#4a68b8"/><rect x="2.5" y="3.5" width="9" height="7.5" fill="#d0def8"/><path d="M2.5 4.5 H11.5 M2.5 6.5 H11.5 M2.5 8.5 H11.5 M2.5 10.5 H11.5" stroke="#7098e4" stroke-width="1"/></svg>
<div style="left:77.1px;top:423.74px;height:14px;line-height:14px;font-size:10.0px;font-family:'Liberation Mono', monospace;color:#000;white-space:nowrap;letter-spacing:-0.67px;-webkit-text-stroke:0.15px currentColor;">mps_MailAttachment</div>
<svg style="left:60px;top:436px" width="14" height="13" viewBox="0 0 14 13"><rect x="0.5" y="0.5" width="13" height="12" fill="#fff" stroke="#98acd8" stroke-width="1"/><rect x="0" y="0" width="14" height="2.6" fill="#6c96e6"/><rect x="0" y="12" width="14" height="1" fill="#3a58a8"/><rect x="13" y="0" width="1" height="13" fill="#4a68b8"/><rect x="2.5" y="3.5" width="9" height="7.5" fill="#d0def8"/><path d="M2.5 4.5 H11.5 M2.5 6.5 H11.5 M2.5 8.5 H11.5 M2.5 10.5 H11.5" stroke="#7098e4" stroke-width="1"/></svg>
<div style="left:77.1px;top:437.7px;height:14px;line-height:14px;font-size:10.0px;font-family:'Liberation Mono', monospace;color:#000;white-space:nowrap;letter-spacing:-0.67px;-webkit-text-stroke:0.15px currentColor;">mps_MailContent</div>
<svg style="left:60px;top:450px" width="14" height="13" viewBox="0 0 14 13"><rect x="0.5" y="0.5" width="13" height="12" fill="#fff" stroke="#98acd8" stroke-width="1"/><rect x="0" y="0" width="14" height="2.6" fill="#6c96e6"/><rect x="0" y="12" width="14" height="1" fill="#3a58a8"/><rect x="13" y="0" width="1" height="13" fill="#4a68b8"/><rect x="2.5" y="3.5" width="9" height="7.5" fill="#d0def8"/><path d="M2.5 4.5 H11.5 M2.5 6.5 H11.5 M2.5 8.5 H11.5 M2.5 10.5 H11.5" stroke="#7098e4" stroke-width="1"/></svg>
<div style="left:77.1px;top:451.66px;height:14px;line-height:14px;font-size:10.0px;font-family:'Liberation Mono', monospace;color:#000;white-space:nowrap;letter-spacing:-0.67px;-webkit-text-stroke:0.15px currentColor;">mps_MailDeleted</div>
<svg style="left:60px;top:464px" width="14" height="13" viewBox="0 0 14 13"><rect x="0.5" y="0.5" width="13" height="12" fill="#fff" stroke="#98acd8" stroke-width="1"/><rect x="0" y="0" width="14" height="2.6" fill="#6c96e6"/><rect x="0" y="12" width="14" height="1" fill="#3a58a8"/><rect x="13" y="0" width="1" height="13" fill="#4a68b8"/><rect x="2.5" y="3.5" width="9" height="7.5" fill="#d0def8"/><path d="M2.5 4.5 H11.5 M2.5 6.5 H11.5 M2.5 8.5 H11.5 M2.5 10.5 H11.5" stroke="#7098e4" stroke-width="1"/></svg>
<div style="left:77.1px;top:465.62px;height:14px;line-height:14px;font-size:10.0px;font-family:'Liberation Mono', monospace;color:#000;white-space:nowrap;letter-spacing:-0.67px;-webkit-text-stroke:0.15px currentColor;">mps_MailReceive</div>
<svg style="left:60px;top:478px" width="14" height="13" viewBox="0 0 14 13"><rect x="0.5" y="0.5" width="13" height="12" fill="#fff" stroke="#98acd8" stroke-width="1"/><rect x="0" y="0" width="14" height="2.6" fill="#6c96e6"/><rect x="0" y="12" width="14" height="1" fill="#3a58a8"/><rect x="13" y="0" width="1" height="13" fill="#4a68b8"/><rect x="2.5" y="3.5" width="9" height="7.5" fill="#d0def8"/><path d="M2.5 4.5 H11.5 M2.5 6.5 H11.5 M2.5 8.5 H11.5 M2.5 10.5 H11.5" stroke="#7098e4" stroke-width="1"/></svg>
<div style="left:77.1px;top:479.58px;height:14px;line-height:14px;font-size:10.0px;font-family:'Liberation Mono', monospace;color:#000;white-space:nowrap;letter-spacing:-0.67px;-webkit-text-stroke:0.15px currentColor;">mps_MailReceiveTask</div>
<svg style="left:60px;top:492px" width="14" height="13" viewBox="0 0 14 13"><rect x="0.5" y="0.5" width="13" height="12" fill="#fff" stroke="#98acd8" stroke-width="1"/><rect x="0" y="0" width="14" height="2.6" fill="#6c96e6"/><rect x="0" y="12" width="14" height="1" fill="#3a58a8"/><rect x="13" y="0" width="1" height="13" fill="#4a68b8"/><rect x="2.5" y="3.5" width="9" height="7.5" fill="#d0def8"/><path d="M2.5 4.5 H11.5 M2.5 6.5 H11.5 M2.5 8.5 H11.5 M2.5 10.5 H11.5" stroke="#7098e4" stroke-width="1"/></svg>
<div style="left:77.1px;top:493.54px;height:14px;line-height:14px;font-size:10.0px;font-family:'Liberation Mono', monospace;color:#000;white-space:nowrap;letter-spacing:-0.67px;-webkit-text-stroke:0.15px currentColor;">mps_MailSend</div>
<svg style="left:60px;top:506px" width="14" height="13" viewBox="0 0 14 13"><rect x="0.5" y="0.5" width="13" height="12" fill="#fff" stroke="#98acd8" stroke-width="1"/><rect x="0" y="0" width="14" height="2.6" fill="#6c96e6"/><rect x="0" y="12" width="14" height="1" fill="#3a58a8"/><rect x="13" y="0" width="1" height="13" fill="#4a68b8"/><rect x="2.5" y="3.5" width="9" height="7.5" fill="#d0def8"/><path d="M2.5 4.5 H11.5 M2.5 6.5 H11.5 M2.5 8.5 H11.5 M2.5 10.5 H11.5" stroke="#7098e4" stroke-width="1"/></svg>
<div style="left:77.1px;top:507.5px;height:14px;line-height:14px;font-size:10.0px;font-family:'Liberation Mono', monospace;color:#000;white-space:nowrap;letter-spacing:-0.67px;-webkit-text-stroke:0.15px currentColor;">mps_MailSendHistory</div>
<svg style="left:60px;top:519px" width="14" height="13" viewBox="0 0 14 13"><rect x="0.5" y="0.5" width="13" height="12" fill="#fff" stroke="#98acd8" stroke-width="1"/><rect x="0" y="0" width="14" height="2.6" fill="#6c96e6"/><rect x="0" y="12" width="14" height="1" fill="#3a58a8"/><rect x="13" y="0" width="1" height="13" fill="#4a68b8"/><rect x="2.5" y="3.5" width="9" height="7.5" fill="#d0def8"/><path d="M2.5 4.5 H11.5 M2.5 6.5 H11.5 M2.5 8.5 H11.5 M2.5 10.5 H11.5" stroke="#7098e4" stroke-width="1"/></svg>
<div style="left:77.1px;top:521.46px;height:14px;line-height:14px;font-size:10.0px;font-family:'Liberation Mono', monospace;color:#000;white-space:nowrap;letter-spacing:-0.67px;-webkit-text-stroke:0.15px currentColor;">mps_MailUnifiedConfig</div>
<svg style="left:60px;top:533px" width="14" height="13" viewBox="0 0 14 13"><rect x="0.5" y="0.5" width="13" height="12" fill="#fff" stroke="#98acd8" stroke-width="1"/><rect x="0" y="0" width="14" height="2.6" fill="#6c96e6"/><rect x="0" y="12" width="14" height="1" fill="#3a58a8"/><rect x="13" y="0" width="1" height="13" fill="#4a68b8"/><rect x="2.5" y="3.5" width="9" height="7.5" fill="#d0def8"/><path d="M2.5 4.5 H11.5 M2.5 6.5 H11.5 M2.5 8.5 H11.5 M2.5 10.5 H11.5" stroke="#7098e4" stroke-width="1"/></svg>
<div style="left:77.1px;top:535.4200000000001px;height:14px;line-height:14px;font-size:10.0px;font-family:'Liberation Mono', monospace;color:#000;white-space:nowrap;letter-spacing:-0.67px;-webkit-text-stroke:0.15px currentColor;">SCH_AppResource</div>
<svg style="left:60px;top:547px" width="14" height="13" viewBox="0 0 14 13"><rect x="0.5" y="0.5" width="13" height="12" fill="#fff" stroke="#98acd8" stroke-width="1"/><rect x="0" y="0" width="14" height="2.6" fill="#6c96e6"/><rect x="0" y="12" width="14" height="1" fill="#3a58a8"/><rect x="13" y="0" width="1" height="13" fill="#4a68b8"/><rect x="2.5" y="3.5" width="9" height="7.5" fill="#d0def8"/><path d="M2.5 4.5 H11.5 M2.5 6.5 H11.5 M2.5 8.5 H11.5 M2.5 10.5 H11.5" stroke="#7098e4" stroke-width="1"/></svg>
<div style="left:77.1px;top:549.38px;height:14px;line-height:14px;font-size:10.0px;font-family:'Liberation Mono', monospace;color:#000;white-space:nowrap;letter-spacing:-0.67px;-webkit-text-stroke:0.15px currentColor;">SCH_UserAppointment</div>
<svg style="left:60px;top:561px" width="14" height="13" viewBox="0 0 14 13"><rect x="0.5" y="0.5" width="13" height="12" fill="#fff" stroke="#98acd8" stroke-width="1"/><rect x="0" y="0" width="14" height="2.6" fill="#6c96e6"/><rect x="0" y="12" width="14" height="1" fill="#3a58a8"/><rect x="13" y="0" width="1" height="13" fill="#4a68b8"/><rect x="2.5" y="3.5" width="9" height="7.5" fill="#d0def8"/><path d="M2.5 4.5 H11.5 M2.5 6.5 H11.5 M2.5 8.5 H11.5 M2.5 10.5 H11.5" stroke="#7098e4" stroke-width="1"/></svg>
<div style="left:77.1px;top:563.34px;height:14px;line-height:14px;font-size:10.0px;font-family:'Liberation Mono', monospace;color:#000;white-space:nowrap;letter-spacing:-0.67px;-webkit-text-stroke:0.15px currentColor;">T_ACL_BlackIP</div>
<svg style="left:60px;top:575px" width="14" height="13" viewBox="0 0 14 13"><rect x="0.5" y="0.5" width="13" height="12" fill="#fff" stroke="#98acd8" stroke-width="1"/><rect x="0" y="0" width="14" height="2.6" fill="#6c96e6"/><rect x="0" y="12" width="14" height="1" fill="#3a58a8"/><rect x="13" y="0" width="1" height="13" fill="#4a68b8"/><rect x="2.5" y="3.5" width="9" height="7.5" fill="#d0def8"/><path d="M2.5 4.5 H11.5 M2.5 6.5 H11.5 M2.5 8.5 H11.5 M2.5 10.5 H11.5" stroke="#7098e4" stroke-width="1"/></svg>
<div style="left:77.1px;top:577.3000000000001px;height:14px;line-height:14px;font-size:10.0px;font-family:'Liberation Mono', monospace;color:#000;white-space:nowrap;letter-spacing:-0.67px;-webkit-text-stroke:0.15px currentColor;">T_ACL_BlackIP_User</div>
<svg style="left:60px;top:589px" width="14" height="13" viewBox="0 0 14 13"><rect x="0.5" y="0.5" width="13" height="12" fill="#fff" stroke="#98acd8" stroke-width="1"/><rect x="0" y="0" width="14" height="2.6" fill="#6c96e6"/><rect x="0" y="12" width="14" height="1" fill="#3a58a8"/><rect x="13" y="0" width="1" height="13" fill="#4a68b8"/><rect x="2.5" y="3.5" width="9" height="7.5" fill="#d0def8"/><path d="M2.5 4.5 H11.5 M2.5 6.5 H11.5 M2.5 8.5 H11.5 M2.5 10.5 H11.5" stroke="#7098e4" stroke-width="1"/></svg>
<div style="left:77.1px;top:591.2600000000001px;height:14px;line-height:14px;font-size:10.0px;font-family:'Liberation Mono', monospace;color:#000;white-space:nowrap;letter-spacing:-0.67px;-webkit-text-stroke:0.15px currentColor;">T_ACL_FieldDomain</div>
<svg style="left:60px;top:603px" width="14" height="13" viewBox="0 0 14 13"><rect x="0.5" y="0.5" width="13" height="12" fill="#fff" stroke="#98acd8" stroke-width="1"/><rect x="0" y="0" width="14" height="2.6" fill="#6c96e6"/><rect x="0" y="12" width="14" height="1" fill="#3a58a8"/><rect x="13" y="0" width="1" height="13" fill="#4a68b8"/><rect x="2.5" y="3.5" width="9" height="7.5" fill="#d0def8"/><path d="M2.5 4.5 H11.5 M2.5 6.5 H11.5 M2.5 8.5 H11.5 M2.5 10.5 H11.5" stroke="#7098e4" stroke-width="1"/></svg>
<div style="left:77.1px;top:605.22px;height:14px;line-height:14px;font-size:10.0px;font-family:'Liberation Mono', monospace;color:#000;white-space:nowrap;letter-spacing:-0.67px;-webkit-text-stroke:0.15px currentColor;">T_ACL_FieldPermit</div>
<svg style="left:60px;top:617px" width="14" height="13" viewBox="0 0 14 13"><rect x="0.5" y="0.5" width="13" height="12" fill="#fff" stroke="#98acd8" stroke-width="1"/><rect x="0" y="0" width="14" height="2.6" fill="#6c96e6"/><rect x="0" y="12" width="14" height="1" fill="#3a58a8"/><rect x="13" y="0" width="1" height="13" fill="#4a68b8"/><rect x="2.5" y="3.5" width="9" height="7.5" fill="#d0def8"/><path d="M2.5 4.5 H11.5 M2.5 6.5 H11.5 M2.5 8.5 H11.5 M2.5 10.5 H11.5" stroke="#7098e4" stroke-width="1"/></svg>
<div style="left:77.1px;top:619.1800000000001px;height:14px;line-height:14px;font-size:10.0px;font-family:'Liberation Mono', monospace;color:#000;white-space:nowrap;letter-spacing:-0.67px;-webkit-text-stroke:0.15px currentColor;">T_ACL_Function</div>
<svg style="left:60px;top:631px" width="14" height="13" viewBox="0 0 14 13"><rect x="0.5" y="0.5" width="13" height="12" fill="#fff" stroke="#98acd8" stroke-width="1"/><rect x="0" y="0" width="14" height="2.6" fill="#6c96e6"/><rect x="0" y="12" width="14" height="1" fill="#3a58a8"/><rect x="13" y="0" width="1" height="13" fill="#4a68b8"/><rect x="2.5" y="3.5" width="9" height="7.5" fill="#d0def8"/><path d="M2.5 4.5 H11.5 M2.5 6.5 H11.5 M2.5 8.5 H11.5 M2.5 10.5 H11.5" stroke="#7098e4" stroke-width="1"/></svg>
<div style="left:77.1px;top:633.1400000000001px;height:14px;line-height:14px;font-size:10.0px;font-family:'Liberation Mono', monospace;color:#000;white-space:nowrap;letter-spacing:-0.67px;-webkit-text-stroke:0.15px currentColor;">T_ACL_JobPost</div>
<svg style="left:60px;top:645px" width="14" height="13" viewBox="0 0 14 13"><rect x="0.5" y="0.5" width="13" height="12" fill="#fff" stroke="#98acd8" stroke-width="1"/><rect x="0" y="0" width="14" height="2.6" fill="#6c96e6"/><rect x="0" y="12" width="14" height="1" fill="#3a58a8"/><rect x="13" y="0" width="1" height="13" fill="#4a68b8"/><rect x="2.5" y="3.5" width="9" height="7.5" fill="#d0def8"/><path d="M2.5 4.5 H11.5 M2.5 6.5 H11.5 M2.5 8.5 H11.5 M2.5 10.5 H11.5" stroke="#7098e4" stroke-width="1"/></svg>
<div style="left:77.1px;top:647.1000000000001px;height:14px;line-height:14px;font-size:10.0px;font-family:'Liberation Mono', monospace;color:#000;white-space:nowrap;letter-spacing:-0.67px;-webkit-text-stroke:0.15px currentColor;">T_ACL_LoginLog</div>
<div style="left:5px;top:661.2px;width:259px;height:18.199999999999932px;background:#e3e3e3;"></div>
<svg style="left:6px;top:662px" width="16" height="15" viewBox="0 0 16 15"><path d="M2 6 L8 1 L14 6 L8 11Z" fill="#3a8ae0"/><circle cx="5" cy="9" r="4" fill="#3ab03a"/><path d="M8 8 L14 8 L12 14 L6 14Z" fill="#f0a020"/></svg>
<div style="left:24px;top:663.0px;height:14px;line-height:14px;font-size:10.44px;font-family:'Liberation Sans', sans-serif;color:#6d6d6d;white-space:nowrap;">自定义模板列表</div>
<div style="left:104.7px;top:661.2px;width:77.3px;height:17.299999999999955px;background:#f7f7f7;border:1px solid #9a9a9a;border-top:none;border-radius:0 0 3px 3px;"></div>
<svg style="left:106px;top:662px" width="15" height="15" viewBox="0 0 15 15"><ellipse cx="7.5" cy="10" rx="6.5" ry="3.5" fill="#3ab03a"/><rect x="4" y="2" width="7" height="8" fill="#f0c020"/><ellipse cx="7.5" cy="2.5" rx="3.5" ry="1.5" fill="#ffe880"/></svg>
<div style="left:121.7px;top:663.0px;height:14px;line-height:14px;font-size:10.44px;font-family:'Liberation Sans', sans-serif;color:#1a1a1a;white-space:nowrap;">数据库信息</div>
<div style="left:264px;top:69.5px;width:4px;height:609.5px;background:#f0f0f0;"></div>
<div style="left:268px;top:69.5px;width:934px;height:609.5px;background:#f0f0f0;border-left:1px solid #9a9a9a;border-right:1px solid #9a9a9a;border-bottom:1px solid #9a9a9a;"></div>
<div style="left:268px;top:89px;width:934px;height:1px;background:#9a9a9a;"></div>
<div style="left:268px;top:90px;width:934px;height:1px;background:#fff;"></div>
<svg style="left:272px;top:72px" width="96" height="18" viewBox="0 0 96 18"><path d="M1.5 17 L17.5 1.5 L90.5 1.5 Q92.5 1.5 92.5 3.5 L92.5 17.5 L1.5 17.5Z" fill="#fff" stroke="#8a8a8a" stroke-width="1"/><rect x="1" y="16.6" width="92" height="3" fill="#fff"/></svg>
<svg style="left:290px;top:77px" width="11" height="11" viewBox="0 0 11 11"><rect x="0" y="9" width="11" height="2" fill="#9fc0e8"/><rect x="0.5" y="0.5" width="10" height="9" fill="#fff" stroke="#b0b0b0" stroke-width="0.8"/><rect x="2" y="2" width="2" height="2" fill="#e04040"/><rect x="5" y="2" width="2" height="2" fill="#40a040"/><rect x="8" y="2" width="1.5" height="2" fill="#e0a020"/><rect x="2" y="5" width="2" height="2" fill="#f0d020"/><rect x="5" y="5" width="2" height="2" fill="#e060c0"/><rect x="8" y="5" width="1.5" height="2" fill="#40c0e0"/></svg>
<div style="left:304.5px;top:75.5px;height:14px;line-height:14px;font-size:10.44px;font-family:'Liberation Sans', sans-serif;color:#000;white-space:nowrap;font-weight:bold;-webkit-text-stroke:0;">表基本信息</div>
<svg style="left:1172px;top:80px" width="7" height="4.5" viewBox="0 0 7 4.5"><path d="M0 0 L7 0 L3.5 4.3Z" fill="#111"/></svg>
<svg style="left:1186px;top:77px" width="8.5" height="7.5" viewBox="0 0 8.5 7.5"><path d="M0.7 0.7 L7.8 6.8 M7.8 0.7 L0.7 6.8" stroke="#111" stroke-width="1.4"/></svg>
<div style="left:350px;top:96.5px;width:850px;height:1.0px;background:#dcdcdc;"></div>
<div style="left:275.7px;top:90.6px;height:14px;line-height:14px;font-size:10.44px;font-family:'Liberation Sans', sans-serif;color:#1a1a1a;white-space:nowrap;">表字段基本信息</div>
<div style="left:1047px;top:102.7px;width:60px;height:17.8px;border:1px solid #4a6d94;border-radius:3px;background:linear-gradient(#f6f6f6,#dedede);font-size:10.5px;line-height:16px;text-align:center;color:#1a1a1a;white-space:nowrap;">刷新</div>
<div style="left:1114.3px;top:102.7px;width:80.70000000000005px;height:17.8px;border:1px solid #4a6d94;border-radius:3px;background:linear-gradient(#f6f6f6,#dedede);font-size:10.5px;line-height:16px;text-align:center;color:#1a1a1a;white-space:nowrap;">设置字段别名</div>
<div style="left:275px;top:129px;width:921px;height:231.3px;background:#ababab;border:1.3px solid #3a3a3a;"></div>
<div style="left:276.3px;top:130.3px;width:918.4000000000001px;height:18.5px;background:#fff;"></div>
<div style="left:311.5px;top:130.8px;width:34.0px;height:18.0px;background:#bcdcf4;"></div>
<div style="left:276.3px;top:148.8px;width:918.4000000000001px;height:105.0px;background:#fff;"></div>
<div style="left:277.8px;top:149.4px;width:33.69999999999999px;height:16.400000000000006px;background:#bcdcf4;"></div>
<div style="left:312.5px;top:149.4px;width:882.5px;height:16.400000000000006px;background:#0078d7;"></div>
<svg style="left:282px;top:155px" width="6" height="8" viewBox="0 0 6 8"><path d="M0.5 0.5 L5.5 4 L0.5 7.5Z" fill="#333"/></svg>
<svg style="left:0;top:0" width="1204" height="400">
<path d="M311.5 130.3 V 148.8" stroke="#e2e2e2" stroke-width="1.2"/>
<path d="M311.5 148.8 V 253.8" stroke="#a0a0a0" stroke-width="1.2"/>
<path d="M345.5 130.3 V 148.8" stroke="#e2e2e2" stroke-width="1.2"/>
<path d="M345.5 148.8 V 253.8" stroke="#a0a0a0" stroke-width="1.2"/>
<path d="M431.4 130.3 V 148.8" stroke="#e2e2e2" stroke-width="1.2"/>
<path d="M431.4 148.8 V 253.8" stroke="#a0a0a0" stroke-width="1.2"/>
<path d="M517.6 130.3 V 148.8" stroke="#e2e2e2" stroke-width="1.2"/>
<path d="M517.6 148.8 V 253.8" stroke="#a0a0a0" stroke-width="1.2"/>
<path d="M603.5 130.3 V 148.8" stroke="#e2e2e2" stroke-width="1.2"/>
<path d="M603.5 148.8 V 253.8" stroke="#a0a0a0" stroke-width="1.2"/>
<path d="M689 130.3 V 148.8" stroke="#e2e2e2" stroke-width="1.2"/>
<path d="M689 148.8 V 253.8" stroke="#a0a0a0" stroke-width="1.2"/>
<path d="M774.5 130.3 V 148.8" stroke="#e2e2e2" stroke-width="1.2"/>
<path d="M774.5 148.8 V 253.8" stroke="#a0a0a0" stroke-width="1.2"/>
<path d="M860.8 130.3 V 148.8" stroke="#e2e2e2" stroke-width="1.2"/>
<path d="M860.8 148.8 V 253.8" stroke="#a0a0a0" stroke-width="1.2"/>
<path d="M947.3 130.3 V 148.8" stroke="#e2e2e2" stroke-width="1.2"/>
<path d="M947.3 148.8 V 253.8" stroke="#a0a0a0" stroke-width="1.2"/>
<path d="M1022 130.3 V 148.8" stroke="#e2e2e2" stroke-width="1.2"/>
<path d="M1022 148.8 V 253.8" stroke="#a0a0a0" stroke-width="1.2"/>
<path d="M1108.4 130.3 V 148.8" stroke="#e2e2e2" stroke-width="1.2"/>
<path d="M1108.4 148.8 V 253.8" stroke="#a0a0a0" stroke-width="1.2"/>
<path d="M276 148.8 H 311.5" stroke="#a0a0a0" stroke-width="1.2"/>
<path d="M311.5 166.3 H 1195" stroke="#a0a0a0" stroke-width="1.2"/>
<path d="M277 166.3 H 311.5" stroke="#dcdcdc" stroke-width="1"/>
<path d="M311.5 183.7 H 1195" stroke="#a0a0a0" stroke-width="1.2"/>
<path d="M277 183.7 H 311.5" stroke="#dcdcdc" stroke-width="1"/>
<path d="M311.5 201.1 H 1195" stroke="#a0a0a0" stroke-width="1.2"/>
<path d="M277 201.1 H 311.5" stroke="#dcdcdc" stroke-width="1"/>
<path d="M311.5 218.5 H 1195" stroke="#a0a0a0" stroke-width="1.2"/>
<path d="M277 218.5 H 311.5" stroke="#dcdcdc" stroke-width="1"/>
<path d="M311.5 235.9 H 1195" stroke="#a0a0a0" stroke-width="1.2"/>
<path d="M277 235.9 H 311.5" stroke="#dcdcdc" stroke-width="1"/>
<path d="M311.5 253.3 H 1195" stroke="#a0a0a0" stroke-width="1.2"/>
<path d="M277 253.3 H 311.5" stroke="#dcdcdc" stroke-width="1"/>
</svg>
<div style="left:317.0px;top:134.0px;height:14px;line-height:14px;font-size:10.44px;font-family:'Liberation Sans', sans-serif;color:#1a1a1a;white-space:nowrap;">编号</div>
<div style="left:351.0px;top:134.0px;height:14px;line-height:14px;font-size:10.44px;font-family:'Liberation Sans', sans-serif;color:#1a1a1a;white-space:nowrap;">名称</div>
<div style="left:436.9px;top:134.0px;height:14px;line-height:14px;font-size:10.44px;font-family:'Liberation Sans', sans-serif;color:#1a1a1a;white-space:nowrap;">字段类型</div>
<div style="left:523.1px;top:134.0px;height:14px;line-height:14px;font-size:10.44px;font-family:'Liberation Sans', sans-serif;color:#1a1a1a;white-space:nowrap;">控件类型</div>
<div style="left:609.0px;top:134.0px;height:14px;line-height:14px;font-size:10.44px;font-family:'Liberation Sans', sans-serif;color:#1a1a1a;white-space:nowrap;">长度</div>
<div style="left:694.5px;top:134.0px;height:14px;line-height:14px;font-size:10.44px;font-family:'Liberation Sans', sans-serif;color:#1a1a1a;white-space:nowrap;">主键</div>
<div style="left:780.0px;top:134.0px;height:14px;line-height:14px;font-size:10.44px;font-family:'Liberation Sans', sans-serif;color:#1a1a1a;white-space:nowrap;">自增</div>
<div style="left:866.3px;top:134.0px;height:14px;line-height:14px;font-size:10.44px;font-family:'Liberation Sans', sans-serif;color:#1a1a1a;white-space:nowrap;">可空</div>
<div style="left:952.8px;top:134.0px;height:14px;line-height:14px;font-size:10.44px;font-family:'Liberation Sans', sans-serif;color:#1a1a1a;white-space:nowrap;">默认值</div>
<div style="left:1027.5px;top:134.0px;height:14px;line-height:14px;font-size:10.44px;font-family:'Liberation Sans', sans-serif;color:#1a1a1a;white-space:nowrap;">别名</div>
<div style="left:1113.9px;top:134.0px;height:14px;line-height:14px;font-size:10.44px;font-family:'Liberation Sans', sans-serif;color:#1a1a1a;white-space:nowrap;">字段描述</div>
<div style="left:313.5px;top:152.4px;height:14px;line-height:14px;font-size:10.2px;font-family:'Liberation Sans', sans-serif;color:#fff;white-space:nowrap;-webkit-text-stroke:0.1px currentColor;"><span style="letter-spacing:0.3px">0</span></div>
<div style="left:347.5px;top:153.6px;height:14px;line-height:14px;font-size:10.0px;font-family:'Liberation Mono', monospace;color:#fff;white-space:nowrap;letter-spacing:-0.67px;-webkit-text-stroke:0.15px currentColor;">ID</div>
<div style="left:433.4px;top:153.6px;height:14px;line-height:14px;font-size:10.0px;font-family:'Liberation Mono', monospace;color:#fff;white-space:nowrap;letter-spacing:-0.67px;-webkit-text-stroke:0.15px currentColor;">NVarChar</div>
<div style="left:519.6px;top:152.4px;height:14px;line-height:14px;font-size:10.44px;font-family:'Liberation Sans', sans-serif;color:#fff;white-space:nowrap;-webkit-text-stroke:0;">单行文本</div>
<div style="left:605.5px;top:152.4px;height:14px;line-height:14px;font-size:10.2px;font-family:'Liberation Sans', sans-serif;color:#fff;white-space:nowrap;-webkit-text-stroke:0.1px currentColor;"><span style="letter-spacing:0.3px">50</span></div>
<div style="left:691px;top:153.6px;height:14px;line-height:14px;font-size:10.0px;font-family:'Liberation Mono', monospace;color:#fff;white-space:nowrap;letter-spacing:-0.67px;-webkit-text-stroke:0.15px currentColor;">True</div>
<div style="left:776.5px;top:153.6px;height:14px;line-height:14px;font-size:10.0px;font-family:'Liberation Mono', monospace;color:#fff;white-space:nowrap;letter-spacing:-0.67px;-webkit-text-stroke:0.15px currentColor;">False</div>
<div style="left:862.8px;top:153.6px;height:14px;line-height:14px;font-size:10.0px;font-family:'Liberation Mono', monospace;color:#fff;white-space:nowrap;letter-spacing:-0.67px;-webkit-text-stroke:0.15px currentColor;">False</div>
<div style="left:949.3px;top:153.6px;height:14px;line-height:14px;font-size:10.0px;font-family:'Liberation Mono', monospace;color:#fff;white-space:nowrap;letter-spacing:-0.67px;-webkit-text-stroke:0.15px currentColor;">newid()</div>
<div style="left:1024px;top:153.6px;height:14px;line-height:14px;font-size:10.0px;font-family:'Liberation Mono', monospace;color:#fff;white-space:nowrap;letter-spacing:-0.67px;-webkit-text-stroke:0.15px currentColor;">ID</div>
<div style="left:1110.4px;top:152.4px;height:14px;line-height:14px;font-size:10.44px;font-family:'Liberation Sans', sans-serif;color:#fff;white-space:nowrap;-webkit-text-stroke:0;">编号</div>
<div style="left:587px;top:150.20000000000002px;width:15px;height:14.099999999999994px;background:#fff;"></div>
<svg style="left:592px;top:157px" width="5" height="3" viewBox="0 0 5 3"><path d="M0 0 L5 0 L2.5 3Z" fill="#222"/></svg>
<div style="left:313.5px;top:169.8px;height:14px;line-height:14px;font-size:10.2px;font-family:'Liberation Sans', sans-serif;color:#000;white-space:nowrap;-webkit-text-stroke:0.1px currentColor;"><span style="letter-spacing:0.3px">1</span></div>
<div style="left:347.5px;top:171.0px;height:14px;line-height:14px;font-size:10.0px;font-family:'Liberation Mono', monospace;color:#000;white-space:nowrap;letter-spacing:-0.67px;-webkit-text-stroke:0.15px currentColor;">Name</div>
<div style="left:433.4px;top:171.0px;height:14px;line-height:14px;font-size:10.0px;font-family:'Liberation Mono', monospace;color:#000;white-space:nowrap;letter-spacing:-0.67px;-webkit-text-stroke:0.15px currentColor;">NVarChar</div>
<div style="left:519.6px;top:169.8px;height:14px;line-height:14px;font-size:10.44px;font-family:'Liberation Sans', sans-serif;color:#000;white-space:nowrap;-webkit-text-stroke:0;">单行文本</div>
<div style="left:605.5px;top:169.8px;height:14px;line-height:14px;font-size:10.2px;font-family:'Liberation Sans', sans-serif;color:#000;white-space:nowrap;-webkit-text-stroke:0.1px currentColor;"><span style="letter-spacing:0.3px">50</span></div>
<div style="left:691px;top:171.0px;height:14px;line-height:14px;font-size:10.0px;font-family:'Liberation Mono', monospace;color:#000;white-space:nowrap;letter-spacing:-0.67px;-webkit-text-stroke:0.15px currentColor;">False</div>
<div style="left:776.5px;top:171.0px;height:14px;line-height:14px;font-size:10.0px;font-family:'Liberation Mono', monospace;color:#000;white-space:nowrap;letter-spacing:-0.67px;-webkit-text-stroke:0.15px currentColor;">False</div>
<div style="left:862.8px;top:171.0px;height:14px;line-height:14px;font-size:10.0px;font-family:'Liberation Mono', monospace;color:#000;white-space:nowrap;letter-spacing:-0.67px;-webkit-text-stroke:0.15px currentColor;">True</div>
<div style="left:1024px;top:171.0px;height:14px;line-height:14px;font-size:10.0px;font-family:'Liberation Mono', monospace;color:#000;white-space:nowrap;letter-spacing:-0.67px;-webkit-text-stroke:0.15px currentColor;">Name</div>
<div style="left:1110.4px;top:169.8px;height:14px;line-height:14px;font-size:10.44px;font-family:'Liberation Sans', sans-serif;color:#000;white-space:nowrap;-webkit-text-stroke:0;">姓名</div>
<div style="left:587px;top:167.60000000000002px;width:15px;height:14.099999999999994px;background:#f0f0f0;"></div>
<svg style="left:592px;top:174px" width="5" height="3" viewBox="0 0 5 3"><path d="M0 0 L5 0 L2.5 3Z" fill="#222"/></svg>
<div style="left:313.5px;top:187.2px;height:14px;line-height:14px;font-size:10.2px;font-family:'Liberation Sans', sans-serif;color:#000;white-space:nowrap;-webkit-text-stroke:0.1px currentColor;"><span style="letter-spacing:0.3px">2</span></div>
<div style="left:347.5px;top:188.39999999999998px;height:14px;line-height:14px;font-size:10.0px;font-family:'Liberation Mono', monospace;color:#000;white-space:nowrap;letter-spacing:-0.67px;-webkit-text-stroke:0.15px currentColor;">Age</div>
<div style="left:433.4px;top:188.39999999999998px;height:14px;line-height:14px;font-size:10.0px;font-family:'Liberation Mono', monospace;color:#000;white-space:nowrap;letter-spacing:-0.67px;-webkit-text-stroke:0.15px currentColor;">Int</div>
<div style="left:519.6px;top:187.2px;height:14px;line-height:14px;font-size:10.44px;font-family:'Liberation Sans', sans-serif;color:#000;white-space:nowrap;-webkit-text-stroke:0;">数值类型</div>
<div style="left:605.5px;top:187.2px;height:14px;line-height:14px;font-size:10.2px;font-family:'Liberation Sans', sans-serif;color:#000;white-space:nowrap;-webkit-text-stroke:0.1px currentColor;"><span style="letter-spacing:0.3px">4</span></div>
<div style="left:691px;top:188.39999999999998px;height:14px;line-height:14px;font-size:10.0px;font-family:'Liberation Mono', monospace;color:#000;white-space:nowrap;letter-spacing:-0.67px;-webkit-text-stroke:0.15px currentColor;">False</div>
<div style="left:776.5px;top:188.39999999999998px;height:14px;line-height:14px;font-size:10.0px;font-family:'Liberation Mono', monospace;color:#000;white-space:nowrap;letter-spacing:-0.67px;-webkit-text-stroke:0.15px currentColor;">False</div>
<div style="left:862.8px;top:188.39999999999998px;height:14px;line-height:14px;font-size:10.0px;font-family:'Liberation Mono', monospace;color:#000;white-space:nowrap;letter-spacing:-0.67px;-webkit-text-stroke:0.15px currentColor;">True</div>
<div style="left:1024px;top:188.39999999999998px;height:14px;line-height:14px;font-size:10.0px;font-family:'Liberation Mono', monospace;color:#000;white-space:nowrap;letter-spacing:-0.67px;-webkit-text-stroke:0.15px currentColor;">Age</div>
<div style="left:1110.4px;top:187.2px;height:14px;line-height:14px;font-size:10.44px;font-family:'Liberation Sans', sans-serif;color:#000;white-space:nowrap;-webkit-text-stroke:0;">年龄</div>
<div style="left:587px;top:185.0px;width:15px;height:14.099999999999994px;background:#f0f0f0;"></div>
<svg style="left:592px;top:191px" width="5" height="3" viewBox="0 0 5 3"><path d="M0 0 L5 0 L2.5 3Z" fill="#222"/></svg>
<div style="left:313.5px;top:204.6px;height:14px;line-height:14px;font-size:10.2px;font-family:'Liberation Sans', sans-serif;color:#000;white-space:nowrap;-webkit-text-stroke:0.1px currentColor;"><span style="letter-spacing:0.3px">3</span></div>
<div style="left:347.5px;top:205.79999999999998px;height:14px;line-height:14px;font-size:10.0px;font-family:'Liberation Mono', monospace;color:#000;white-space:nowrap;letter-spacing:-0.67px;-webkit-text-stroke:0.15px currentColor;">Creator</div>
<div style="left:433.4px;top:205.79999999999998px;height:14px;line-height:14px;font-size:10.0px;font-family:'Liberation Mono', monospace;color:#000;white-space:nowrap;letter-spacing:-0.67px;-webkit-text-stroke:0.15px currentColor;">NVarChar</div>
<div style="left:519.6px;top:204.6px;height:14px;line-height:14px;font-size:10.44px;font-family:'Liberation Sans', sans-serif;color:#000;white-space:nowrap;-webkit-text-stroke:0;">单行文本</div>
<div style="left:605.5px;top:204.6px;height:14px;line-height:14px;font-size:10.2px;font-family:'Liberation Sans', sans-serif;color:#000;white-space:nowrap;-webkit-text-stroke:0.1px currentColor;"><span style="letter-spacing:0.3px">50</span></div>
<div style="left:691px;top:205.79999999999998px;height:14px;line-height:14px;font-size:10.0px;font-family:'Liberation Mono', monospace;color:#000;white-space:nowrap;letter-spacing:-0.67px;-webkit-text-stroke:0.15px currentColor;">False</div>
<div style="left:776.5px;top:205.79999999999998px;height:14px;line-height:14px;font-size:10.0px;font-family:'Liberation Mono', monospace;color:#000;white-space:nowrap;letter-spacing:-0.67px;-webkit-text-stroke:0.15px currentColor;">False</div>
<div style="left:862.8px;top:205.79999999999998px;height:14px;line-height:14px;font-size:10.0px;font-family:'Liberation Mono', monospace;color:#000;white-space:nowrap;letter-spacing:-0.67px;-webkit-text-stroke:0.15px currentColor;">True</div>
<div style="left:1024px;top:205.79999999999998px;height:14px;line-height:14px;font-size:10.0px;font-family:'Liberation Mono', monospace;color:#000;white-space:nowrap;letter-spacing:-0.67px;-webkit-text-stroke:0.15px currentColor;">Creator</div>
<div style="left:1110.4px;top:204.6px;height:14px;line-height:14px;font-size:10.44px;font-family:'Liberation Sans', sans-serif;color:#000;white-space:nowrap;-webkit-text-stroke:0;">创建人</div>
<div style="left:587px;top:202.4px;width:15px;height:14.099999999999994px;background:#f0f0f0;"></div>
<svg style="left:592px;top:209px" width="5" height="3" viewBox="0 0 5 3"><path d="M0 0 L5 0 L2.5 3Z" fill="#222"/></svg>
<div style="left:313.5px;top:222.0px;height:14px;line-height:14px;font-size:10.2px;font-family:'Liberation Sans', sans-serif;color:#000;white-space:nowrap;-webkit-text-stroke:0.1px currentColor;"><span style="letter-spacing:0.3px">4</span></div>
<div style="left:347.5px;top:223.2px;height:14px;line-height:14px;font-size:10.0px;font-family:'Liberation Mono', monospace;color:#000;white-space:nowrap;letter-spacing:-0.67px;-webkit-text-stroke:0.15px currentColor;">CreateTime</div>
<div style="left:433.4px;top:223.2px;height:14px;line-height:14px;font-size:10.0px;font-family:'Liberation Mono', monospace;color:#000;white-space:nowrap;letter-spacing:-0.67px;-webkit-text-stroke:0.15px currentColor;">DateTime</div>
<div style="left:519.6px;top:222.0px;height:14px;line-height:14px;font-size:10.44px;font-family:'Liberation Sans', sans-serif;color:#000;white-space:nowrap;-webkit-text-stroke:0;">日期类型</div>
<div style="left:605.5px;top:222.0px;height:14px;line-height:14px;font-size:10.2px;font-family:'Liberation Sans', sans-serif;color:#000;white-space:nowrap;-webkit-text-stroke:0.1px currentColor;"><span style="letter-spacing:0.3px">8</span></div>
<div style="left:691px;top:223.2px;height:14px;line-height:14px;font-size:10.0px;font-family:'Liberation Mono', monospace;color:#000;white-space:nowrap;letter-spacing:-0.67px;-webkit-text-stroke:0.15px currentColor;">False</div>
<div style="left:776.5px;top:223.2px;height:14px;line-height:14px;font-size:10.0px;font-family:'Liberation Mono', monospace;color:#000;white-space:nowrap;letter-spacing:-0.67px;-webkit-text-stroke:0.15px currentColor;">False</div>
<div style="left:862.8px;top:223.2px;height:14px;line-height:14px;font-size:10.0px;font-family:'Liberation Mono', monospace;color:#000;white-space:nowrap;letter-spacing:-0.67px;-webkit-text-stroke:0.15px currentColor;">True</div>
<div style="left:949.3px;top:223.2px;height:14px;line-height:14px;font-size:10.0px;font-family:'Liberation Mono', monospace;color:#000;white-space:nowrap;letter-spacing:-0.67px;-webkit-text-stroke:0.15px currentColor;">getdate()</div>
<div style="left:1024px;top:223.2px;height:14px;line-height:14px;font-size:10.0px;font-family:'Liberation Mono', monospace;color:#000;white-space:nowrap;letter-spacing:-0.67px;-webkit-text-stroke:0.15px currentColor;">CreateTime</div>
<div style="left:1110.4px;top:222.0px;height:14px;line-height:14px;font-size:10.44px;font-family:'Liberation Sans', sans-serif;color:#000;white-space:nowrap;-webkit-text-stroke:0;">创建时间</div>
<div style="left:587px;top:219.8px;width:15px;height:14.099999999999994px;background:#f0f0f0;"></div>
<svg style="left:592px;top:226px" width="5" height="3" viewBox="0 0 5 3"><path d="M0 0 L5 0 L2.5 3Z" fill="#222"/></svg>
<div style="left:313.5px;top:239.4px;height:14px;line-height:14px;font-size:10.2px;font-family:'Liberation Sans', sans-serif;color:#000;white-space:nowrap;-webkit-text-stroke:0.1px currentColor;"><span style="letter-spacing:0.3px">5</span></div>
<div style="left:347.5px;top:240.6px;height:14px;line-height:14px;font-size:10.0px;font-family:'Liberation Mono', monospace;color:#000;white-space:nowrap;letter-spacing:-0.67px;-webkit-text-stroke:0.15px currentColor;">Is_Deleted</div>
<div style="left:433.4px;top:240.6px;height:14px;line-height:14px;font-size:10.0px;font-family:'Liberation Mono', monospace;color:#000;white-space:nowrap;letter-spacing:-0.67px;-webkit-text-stroke:0.15px currentColor;">Int</div>
<div style="left:519.6px;top:239.4px;height:14px;line-height:14px;font-size:10.44px;font-family:'Liberation Sans', sans-serif;color:#000;white-space:nowrap;-webkit-text-stroke:0;">数值类型</div>
<div style="left:605.5px;top:239.4px;height:14px;line-height:14px;font-size:10.2px;font-family:'Liberation Sans', sans-serif;color:#000;white-space:nowrap;-webkit-text-stroke:0.1px currentColor;"><span style="letter-spacing:0.3px">4</span></div>
<div style="left:691px;top:240.6px;height:14px;line-height:14px;font-size:10.0px;font-family:'Liberation Mono', monospace;color:#000;white-space:nowrap;letter-spacing:-0.67px;-webkit-text-stroke:0.15px currentColor;">False</div>
<div style="left:776.5px;top:240.6px;height:14px;line-height:14px;font-size:10.0px;font-family:'Liberation Mono', monospace;color:#000;white-space:nowrap;letter-spacing:-0.67px;-webkit-text-stroke:0.15px currentColor;">False</div>
<div style="left:862.8px;top:240.6px;height:14px;line-height:14px;font-size:10.0px;font-family:'Liberation Mono', monospace;color:#000;white-space:nowrap;letter-spacing:-0.67px;-webkit-text-stroke:0.15px currentColor;">True</div>
<div style="left:949.3px;top:240.6px;height:14px;line-height:14px;font-size:10.0px;font-family:'Liberation Mono', monospace;color:#000;white-space:nowrap;letter-spacing:-0.67px;-webkit-text-stroke:0.15px currentColor;">0</div>
<div style="left:1024px;top:240.6px;height:14px;line-height:14px;font-size:10.0px;font-family:'Liberation Mono', monospace;color:#000;white-space:nowrap;letter-spacing:-0.67px;-webkit-text-stroke:0.15px currentColor;">Is_Deleted</div>
<div style="left:587px;top:237.20000000000002px;width:15px;height:14.099999999999994px;background:#f0f0f0;"></div>
<svg style="left:592px;top:244px" width="5" height="3" viewBox="0 0 5 3"><path d="M0 0 L5 0 L2.5 3Z" fill="#222"/></svg>
<div style="left:268.5px;top:360.3px;width:932.5px;height:3.1999999999999886px;background:#fafafa;"></div>
<div style="left:268.5px;top:363.5px;width:932.5px;height:5.5px;background:#efefef;"></div>
<div style="left:269px;top:369px;width:918px;height:294.70000000000005px;background:#fff;"></div>
<div style="left:269px;top:663.7px;width:932px;height:14.799999999999955px;background:#f0f0f0;"></div>
<div style="left:1187px;top:369px;width:14px;height:294.70000000000005px;background:#f0f0f0;"></div>
<div style="left:1193px;top:384px;width:2px;height:167.5px;background:#7a7a7a;"></div>
<div style="left:283px;top:669.8px;width:770.5999999999999px;height:2.0px;background:#7a7a7a;"></div>
<svg style="left:0;top:0" width="1204" height="696"><path d="M290.5 369 V 663" stroke="#c8c8c8" stroke-width="1" stroke-dasharray="1 1"/></svg>
<div style="left:863px;top:369px;width:1px;height:294.70000000000005px;background:#e2e2e2;"></div>
<div style="left:269.8px;top:375.1px;height:14px;line-height:14px;font-size:11.615px;font-family:'Liberation Mono', monospace;color:#a8a8a8;white-space:nowrap;-webkit-text-stroke:0;">1</div>
<div style="left:269.8px;top:389.75px;height:14px;line-height:14px;font-size:11.615px;font-family:'Liberation Mono', monospace;color:#a8a8a8;white-space:nowrap;-webkit-text-stroke:0;">2</div>
<div style="left:269.8px;top:404.40000000000003px;height:14px;line-height:14px;font-size:11.615px;font-family:'Liberation Mono', monospace;color:#a8a8a8;white-space:nowrap;-webkit-text-stroke:0;">3</div>
<div style="left:269.8px;top:419.05px;height:14px;line-height:14px;font-size:11.615px;font-family:'Liberation Mono', monospace;color:#a8a8a8;white-space:nowrap;-webkit-text-stroke:0;">4</div>
<div style="left:269.8px;top:433.70000000000005px;height:14px;line-height:14px;font-size:11.615px;font-family:'Liberation Mono', monospace;color:#a8a8a8;white-space:nowrap;-webkit-text-stroke:0;">5</div>
<div style="left:269.8px;top:448.35px;height:14px;line-height:14px;font-size:11.615px;font-family:'Liberation Mono', monospace;color:#a8a8a8;white-space:nowrap;-webkit-text-stroke:0;">6</div>
<div style="left:269.8px;top:463.0px;height:14px;line-height:14px;font-size:11.615px;font-family:'Liberation Mono', monospace;color:#a8a8a8;white-space:nowrap;-webkit-text-stroke:0;">7</div>
<div style="left:269.8px;top:477.65000000000003px;height:14px;line-height:14px;font-size:11.615px;font-family:'Liberation Mono', monospace;color:#a8a8a8;white-space:nowrap;-webkit-text-stroke:0;">8</div>
<div style="left:269.8px;top:492.3px;height:14px;line-height:14px;font-size:11.615px;font-family:'Liberation Mono', monospace;color:#a8a8a8;white-space:nowrap;-webkit-text-stroke:0;">9</div>
<div style="left:269.8px;top:506.95000000000005px;height:14px;line-height:14px;font-size:11.615px;font-family:'Liberation Mono', monospace;color:#a8a8a8;white-space:nowrap;-webkit-text-stroke:0;">10</div>
<div style="left:269.8px;top:521.6px;height:14px;line-height:14px;font-size:11.615px;font-family:'Liberation Mono', monospace;color:#a8a8a8;white-space:nowrap;-webkit-text-stroke:0;">11</div>
<div style="left:269.8px;top:536.25px;height:14px;line-height:14px;font-size:11.615px;font-family:'Liberation Mono', monospace;color:#a8a8a8;white-space:nowrap;-webkit-text-stroke:0;">12</div>
<div style="left:269.8px;top:550.9000000000001px;height:14px;line-height:14px;font-size:11.615px;font-family:'Liberation Mono', monospace;color:#a8a8a8;white-space:nowrap;-webkit-text-stroke:0;">13</div>
<div style="left:269.8px;top:565.5500000000001px;height:14px;line-height:14px;font-size:11.615px;font-family:'Liberation Mono', monospace;color:#a8a8a8;white-space:nowrap;-webkit-text-stroke:0;">14</div>
<div style="left:269.8px;top:580.2px;height:14px;line-height:14px;font-size:11.615px;font-family:'Liberation Mono', monospace;color:#a8a8a8;white-space:nowrap;-webkit-text-stroke:0;">15</div>
<div style="left:269.8px;top:594.85px;height:14px;line-height:14px;font-size:11.615px;font-family:'Liberation Mono', monospace;color:#a8a8a8;white-space:nowrap;-webkit-text-stroke:0;">16</div>
<div style="left:269.8px;top:609.5px;height:14px;line-height:14px;font-size:11.615px;font-family:'Liberation Mono', monospace;color:#a8a8a8;white-space:nowrap;-webkit-text-stroke:0;">17</div>
<div style="left:269.8px;top:624.1500000000001px;height:14px;line-height:14px;font-size:11.615px;font-family:'Liberation Mono', monospace;color:#a8a8a8;white-space:nowrap;-webkit-text-stroke:0;">18</div>
<div style="left:305.0px;top:370.6px;height:16px;line-height:16px;font-size:11.615px;font-family:'Liberation Mono', monospace;white-space:pre;-webkit-text-stroke:0;"><span style="color:#0000ff">create table </span><span style="color:#000">T_Customer</span><span style="color:#808080"> (</span></div>
<div style="left:325.907px;top:385.25px;height:16px;line-height:16px;font-size:11.615px;font-family:'Liberation Mono', monospace;white-space:pre;-webkit-text-stroke:0;"><span style="color:#000">ID</span><span style="color:#0000ff">  nvarchar</span><span style="color:#808080">(</span><span style="color:#000">50</span><span style="color:#808080">)</span></div>
<div style="left:325.907px;top:399.90000000000003px;height:16px;line-height:16px;font-size:11.615px;font-family:'Liberation Mono', monospace;white-space:pre;-webkit-text-stroke:0;"><span style="color:#000">Name</span><span style="color:#0000ff">  nvarchar</span></div>
<div style="left:325.907px;top:414.55px;height:16px;line-height:16px;font-size:11.615px;font-family:'Liberation Mono', monospace;white-space:pre;-webkit-text-stroke:0;"><span style="color:#000">ID</span><span style="color:#0000ff">  nvarchar</span><span style="color:#808080">(50)</span><span style="color:#0000ff">  not null</span></div>
<div style="left:534.977px;top:414.55px;height:16px;line-height:16px;font-size:11.615px;font-family:'Liberation Mono', monospace;white-space:pre;-webkit-text-stroke:0;"><span style="color:#0000ff">DEFAULT</span><span style="color:#808080">(</span><span style="color:#ff00ff">newid</span><span style="color:#808080">())</span><span style="color:#000">  ,</span></div>
<div style="left:325.907px;top:473.15000000000003px;height:16px;line-height:16px;font-size:11.615px;font-family:'Liberation Mono', monospace;white-space:pre;-webkit-text-stroke:0;"><span style="color:#000">CreateTime</span><span style="color:#0000ff">  datetime</span></div>
<div style="left:534.977px;top:473.15000000000003px;height:16px;line-height:16px;font-size:11.615px;font-family:'Liberation Mono', monospace;white-space:pre;-webkit-text-stroke:0;"><span style="color:#0000ff">DEFAULT</span><span style="color:#808080">(</span><span style="color:#ff00ff">getdate</span><span style="color:#808080">())</span><span style="color:#000">  ,</span></div>
<div style="left:325.907px;top:487.8px;height:16px;line-height:16px;font-size:11.615px;font-family:'Liberation Mono', monospace;white-space:pre;-webkit-text-stroke:0;"><span style="color:#000">Is_Deleted</span><span style="color:#0000ff">  int</span></div>
<div style="left:500.132px;top:487.8px;height:16px;line-height:16px;font-size:11.615px;font-family:'Liberation Mono', monospace;white-space:pre;-webkit-text-stroke:0;"><span style="color:#0000ff">DEFAULT</span><span style="color:#808080">(</span><span style="color:#000">0</span><span style="color:#808080">)</span><span style="color:#000">  ,</span></div>
<div style="left:325.907px;top:502.45000000000005px;height:16px;line-height:16px;font-size:11.615px;font-family:'Liberation Mono', monospace;white-space:pre;-webkit-text-stroke:0;"><span style="color:#0000ff">constraint PK_T_</span></div>
<div style="left:521.039px;top:502.45000000000005px;height:16px;line-height:16px;font-size:11.615px;font-family:'Liberation Mono', monospace;white-space:pre;-webkit-text-stroke:0;"><span style="color:#0000ff">PRIMARY KEY CLUSTERED </span><span style="color:#808080">([</span><span style="color:#0000ff">ID</span><span style="color:#808080">])</span></div>
<div style="left:305.0px;top:517.1px;height:16px;line-height:16px;font-size:11.615px;font-family:'Liberation Mono', monospace;white-space:pre;-webkit-text-stroke:0;"><span style="color:#808080">)</span></div>
<div style="left:305.0px;top:546.4000000000001px;height:16px;line-height:16px;font-size:11.615px;font-family:'Liberation Mono', monospace;white-space:pre;-webkit-text-stroke:0;"><span style="color:#0000ff">exec</span><span style="color:#000"> </span><span style="color:#800000">sp_addextendedproperty</span><span style="color:#000"> N</span><span style="color:#ff0000">&#x27;MS_Description&#x27;</span><span style="color:#000">, N</span><span style="color:#ff0000">&#x27;<span style="display:inline-block;width:13.938px;font-family:'Liberation Sans', sans-serif;font-size:12.5px;text-align:center">编</span><span style="display:inline-block;width:13.938px;font-family:'Liberation Sans', sans-serif;font-size:12.5px;text-align:center">号</span>&#x27;</span><span style="color:#000">, N</span><span style="color:#ff0000">&#x27;user&#x27;</span><span style="color:#000">, N</span><span style="color:#ff0000">&#x27;dbo&#x27;</span><span style="color:#000">, N</span><span style="color:#ff0000">&#x27;table&#x27;</span><span style="color:#000">, N</span><span style="color:#ff0000">&#x27;T_Customer&#x27;</span><span style="color:#000">, N</span><span style="color:#ff0000">&#x27;column&#x27;</span><span style="color:#000">, N</span><span style="color:#ff0000">&#x27;ID&#x27;</span></div>
<div style="left:305.0px;top:561.0500000000001px;height:16px;line-height:16px;font-size:11.615px;font-family:'Liberation Mono', monospace;white-space:pre;-webkit-text-stroke:0;"><span style="color:#0000ff">exec</span><span style="color:#000"> </span><span style="color:#800000">sp_addextendedproperty</span><span style="color:#000"> N</span><span style="color:#ff0000">&#x27;MS_Description&#x27;</span><span style="color:#000">, N</span><span style="color:#ff0000">&#x27;<span style="display:inline-block;width:13.938px;font-family:'Liberation Sans', sans-serif;font-size:12.5px;text-align:center">姓</span><span style="display:inline-block;width:13.938px;font-family:'Liberation Sans', sans-serif;font-size:12.5px;text-align:center">名</span>&#x27;</span><span style="color:#000">, N</span><span style="color:#ff0000">&#x27;user&#x27;</span><span style="color:#000">, N</span><span style="color:#ff0000">&#x27;dbo&#x27;</span><span style="color:#000">, N</span><span style="color:#ff0000">&#x27;table&#x27;</span><span style="color:#000">, N</span><span style="color:#ff0000">&#x27;T_Customer&#x27;</span><span style="color:#000">, N</span><span style="color:#ff0000">&#x27;column&#x27;</span><span style="color:#000">, N</span><span style="color:#ff0000">&#x27;Name&#x27;</span></div>
<div style="left:305.0px;top:575.7px;height:16px;line-height:16px;font-size:11.615px;font-family:'Liberation Mono', monospace;white-space:pre;-webkit-text-stroke:0;"><span style="color:#0000ff">exec</span><span style="color:#000"> </span><span style="color:#800000">sp_addextendedproperty</span><span style="color:#000"> N</span><span style="color:#ff0000">&#x27;MS_Description&#x27;</span><span style="color:#000">, N</span><span style="color:#ff0000">&#x27;<span style="display:inline-block;width:13.938px;font-family:'Liberation Sans', sans-serif;font-size:12.5px;text-align:center">年</span><span style="display:inline-block;width:13.938px;font-family:'Liberation Sans', sans-serif;font-size:12.5px;text-align:center">龄</span>&#x27;</span><span style="color:#000">, N</span><span style="color:#ff0000">&#x27;user&#x27;</span><span style="color:#000">, N</span><span style="color:#ff0000">&#x27;dbo&#x27;</span><span style="color:#000">, N</span><span style="color:#ff0000">&#x27;table&#x27;</span><span style="color:#000">, N</span><span style="color:#ff0000">&#x27;T_Customer&#x27;</span><span style="color:#000">, N</span><span style="color:#ff0000">&#x27;column&#x27;</span><span style="color:#000">, N</span><span style="color:#ff0000">&#x27;Age&#x27;</span></div>
<div style="left:305.0px;top:590.35px;height:16px;line-height:16px;font-size:11.615px;font-family:'Liberation Mono', monospace;white-space:pre;-webkit-text-stroke:0;"><span style="color:#0000ff">exec</span><span style="color:#000"> </span><span style="color:#800000">sp_addextendedproperty</span><span style="color:#000"> N</span><span style="color:#ff0000">&#x27;MS_Description&#x27;</span><span style="color:#000">, N</span><span style="color:#ff0000">&#x27;<span style="display:inline-block;width:13.938px;font-family:'Liberation Sans', sans-serif;font-size:12.5px;text-align:center">创</span><span style="display:inline-block;width:13.938px;font-family:'Liberation Sans', sans-serif;font-size:12.5px;text-align:center">建</span><span style="display:inline-block;width:13.938px;font-family:'Liberation Sans', sans-serif;font-size:12.5px;text-align:center">人</span>&#x27;</span><span style="color:#000">, N</span><span style="color:#ff0000">&#x27;user&#x27;</span><span style="color:#000">, N</span><span style="color:#ff0000">&#x27;dbo&#x27;</span><span style="color:#000">, N</span><span style="color:#ff0000">&#x27;table&#x27;</span><span style="color:#000">, N</span><span style="color:#ff0000">&#x27;T_Customer&#x27;</span><span style="color:#000">, N</span><span style="color:#ff0000">&#x27;column&#x27;</span><span style="color:#000">, N</span><span style="color:#ff0000">&#x27;Creator&#x27;</span></div>
<div style="left:305.0px;top:605.0px;height:16px;line-height:16px;font-size:11.615px;font-family:'Liberation Mono', monospace;white-space:pre;-webkit-text-stroke:0;"><span style="color:#0000ff">exec</span><span style="color:#000"> </span><span style="color:#800000">sp_addextendedproperty</span><span style="color:#000"> N</span><span style="color:#ff0000">&#x27;MS_Description&#x27;</span><span style="color:#000">, N</span><span style="color:#ff0000">&#x27;<span style="display:inline-block;width:13.938px;font-family:'Liberation Sans', sans-serif;font-size:12.5px;text-align:center">创</span><span style="display:inline-block;width:13.938px;font-family:'Liberation Sans', sans-serif;font-size:12.5px;text-align:center">建</span><span style="display:inline-block;width:13.938px;font-family:'Liberation Sans', sans-serif;font-size:12.5px;text-align:center">时</span><span style="display:inline-block;width:13.938px;font-family:'Liberation Sans', sans-serif;font-size:12.5px;text-align:center">间</span>&#x27;</span><span style="color:#000">, N</span><span style="color:#ff0000">&#x27;user&#x27;</span><span style="color:#000">, N</span><span style="color:#ff0000">&#x27;dbo&#x27;</span><span style="color:#000">, N</span><span style="color:#ff0000">&#x27;table&#x27;</span><span style="color:#000">, N</span><span style="color:#ff0000">&#x27;T_Customer&#x27;</span><span style="color:#000">, N</span><span style="color:#ff0000">&#x27;column&#x27;</span><span style="color:#000">, N</span><span style="color:#ff0000">&#x27;CreateTime&#x27;</span></div>
<div style="left:3px;top:679px;width:1198px;height:17px;background:#f0f0f0;"></div>
<div style="left:1198px;top:686px;width:1.599999999999909px;height:1.6000000000000227px;background:#a0a0a0;"></div>
<div style="left:1194px;top:690px;width:1.599999999999909px;height:1.6000000000000227px;background:#a0a0a0;"></div>
<div style="left:1198px;top:690px;width:1.599999999999909px;height:1.6000000000000227px;background:#a0a0a0;"></div>
<div style="left:1190px;top:694px;width:1.599999999999909px;height:1.6000000000000227px;background:#a0a0a0;"></div>
<div style="left:1194px;top:694px;width:1.599999999999909px;height:1.6000000000000227px;background:#a0a0a0;"></div>
<div style="left:1198px;top:694px;width:1.599999999999909px;height:1.6000000000000227px;background:#a0a0a0;"></div>
<div style="left:128.5px;top:245px;width:190.5px;height:229.96000000000004px;background:#fcfcfc;border:1px solid #a0a0a0;box-shadow:3px 3px 2px -1px rgba(0,0,0,0.5);"></div>
<div style="left:129.5px;top:246px;width:20.0px;height:227.96000000000004px;background:linear-gradient(90deg,#fcfcfc,#f1f1f1);"></div>
<div style="left:130.1px;top:246.0px;width:187.3px;height:19.76px;background:#bad8f3;border:1.5px solid #45a0f2;border-radius:2px;box-shadow:inset 0 0 0 1px #d4e8f9;"></div>
<div style="left:159.8px;top:250.07999999999998px;height:14px;line-height:14px;font-size:10.44px;font-family:'Liberation Sans', sans-serif;color:#1a1a1a;white-space:nowrap;">代码生成</div>
<svg style="left:305px;top:253px" width="4.5" height="6.6" viewBox="0 0 4.5 6.6"><path d="M0 0 L4.5 3.3 L0 6.6Z" fill="#111"/></svg>
<div style="left:159.8px;top:269.24px;height:14px;line-height:14px;font-size:10.44px;font-family:'Liberation Sans', sans-serif;color:#1a1a1a;white-space:nowrap;">实体类生成快速入口</div>
<svg style="left:305px;top:272px" width="4.5" height="6.6" viewBox="0 0 4.5 6.6"><path d="M0 0 L4.5 3.3 L0 6.6Z" fill="#111"/></svg>
<div style="left:159.8px;top:288.40000000000003px;height:14px;line-height:14px;font-size:10.44px;font-family:'Liberation Sans', sans-serif;color:#1a1a1a;white-space:nowrap;">实体类属性生成<span style="letter-spacing:0.3px">(P)</span></div>
<div style="left:159.8px;top:307.56000000000006px;height:14px;line-height:14px;font-size:10.44px;font-family:'Liberation Sans', sans-serif;color:#1a1a1a;white-space:nowrap;"><span style="letter-spacing:0.3px">Winform</span>界面代码生成<span style="letter-spacing:0.3px">(W)</span></div>
<div style="left:159.8px;top:326.7200000000001px;height:14px;line-height:14px;font-size:10.44px;font-family:'Liberation Sans', sans-serif;color:#1a1a1a;white-space:nowrap;">数据库文档生成<span style="letter-spacing:0.3px">(D)</span></div>
<div style="left:157.3px;top:344.5000000000001px;width:159.7px;height:1.0px;background:#d7d7d7;"></div>
<div style="left:159.8px;top:351.2800000000001px;height:14px;line-height:14px;font-size:10.44px;font-family:'Liberation Sans', sans-serif;color:#1a1a1a;white-space:nowrap;"><span style="letter-spacing:0.3px">SQL </span>查询分析器<span style="letter-spacing:0.3px">(A)</span></div>
<div style="left:159.8px;top:370.4400000000001px;height:14px;line-height:14px;font-size:10.44px;font-family:'Liberation Sans', sans-serif;color:#8d8d8d;white-space:nowrap;"><span style="letter-spacing:0.3px">SQL</span>语句生成<span style="letter-spacing:0.3px">(M)</span></div>
<svg style="left:305px;top:373px" width="4.5" height="6.6" viewBox="0 0 4.5 6.6"><path d="M0 0 L4.5 3.3 L0 6.6Z" fill="#a0a0a0"/></svg>
<div style="left:159.8px;top:389.60000000000014px;height:14px;line-height:14px;font-size:10.44px;font-family:'Liberation Sans', sans-serif;color:#1a1a1a;white-space:nowrap;">拷贝列表内容<span style="letter-spacing:0.3px">(C)</span></div>
<div style="left:157.3px;top:407.38000000000017px;width:159.7px;height:1.0px;background:#d7d7d7;"></div>
<div style="left:159.8px;top:414.16000000000014px;height:14px;line-height:14px;font-size:10.44px;font-family:'Liberation Sans', sans-serif;color:#1a1a1a;white-space:nowrap;">表别名修改</div>
<div style="left:159.8px;top:433.32000000000016px;height:14px;line-height:14px;font-size:10.44px;font-family:'Liberation Sans', sans-serif;color:#1a1a1a;white-space:nowrap;">重新加载数据库<span style="letter-spacing:0.3px">(R)</span></div>
<div style="left:157.3px;top:451.1000000000002px;width:159.7px;height:1.0px;background:#d7d7d7;"></div>
<div style="left:159.8px;top:457.88000000000017px;height:14px;line-height:14px;font-size:10.44px;font-family:'Liberation Sans', sans-serif;color:#1a1a1a;white-space:nowrap;">刷新数据库列表</div>
<div style="left:318px;top:246.4px;width:247px;height:298.2400000000001px;background:#fcfcfc;border:1px solid #a0a0a0;box-shadow:3px 3px 2px -1px rgba(0,0,0,0.5);"></div>
<div style="left:319px;top:247.4px;width:21px;height:296.2400000000001px;background:linear-gradient(90deg,#fcfcfc,#f1f1f1);"></div>
<div style="left:350.2px;top:251.48000000000002px;height:14px;line-height:14px;font-size:10.44px;font-family:'Liberation Sans', sans-serif;color:#1a1a1a;white-space:nowrap;"><span style="letter-spacing:0.3px">EnterpriseLibrary</span>代码生成<span style="letter-spacing:0.3px">(E)</span></div>
<div style="left:350.2px;top:270.64px;height:14px;line-height:14px;font-size:10.44px;font-family:'Liberation Sans', sans-serif;color:#1a1a1a;white-space:nowrap;"><span style="letter-spacing:0.3px">Web</span>界面代码生成<span style="letter-spacing:0.3px">(I)</span></div>
<div style="left:350.2px;top:289.8px;height:14px;line-height:14px;font-size:10.44px;font-family:'Liberation Sans', sans-serif;color:#1a1a1a;white-space:nowrap;"><span style="letter-spacing:0.3px">Bootstrap</span>的<span style="letter-spacing:0.3px">Web</span>界面代码生成<span style="letter-spacing:0.3px">(B)</span></div>
<div style="left:347.7px;top:307.58000000000004px;width:215.3px;height:1.0px;background:#d7d7d7;"></div>
<div style="left:350.2px;top:314.36px;height:14px;line-height:14px;font-size:10.44px;font-family:'Liberation Sans', sans-serif;color:#1a1a1a;white-space:nowrap;"><span style="letter-spacing:0.3px">EntityFramework</span>实体框架代码生成<span style="letter-spacing:0.3px">(F)</span></div>
<div style="left:347.7px;top:332.14000000000004px;width:215.3px;height:1.0px;background:#d7d7d7;"></div>
<div style="left:350.2px;top:338.92px;height:14px;line-height:14px;font-size:10.44px;font-family:'Liberation Sans', sans-serif;color:#1a1a1a;white-space:nowrap;"><span style="letter-spacing:0.3px">Web API</span>控制器代码生成<span style="letter-spacing:0.3px">(W)</span></div>
<div style="left:347.7px;top:356.70000000000005px;width:215.3px;height:1.0px;background:#d7d7d7;"></div>
<div style="left:350.2px;top:363.48px;height:14px;line-height:14px;font-size:10.44px;font-family:'Liberation Sans', sans-serif;color:#1a1a1a;white-space:nowrap;"><span style="letter-spacing:0.3px">ABP</span>框架代码生成<span style="letter-spacing:0.3px">(A)</span></div>
<div style="left:350.2px;top:382.64000000000004px;height:14px;line-height:14px;font-size:10.44px;font-family:'Liberation Sans', sans-serif;color:#1a1a1a;white-space:nowrap;"><span style="letter-spacing:0.3px">ABP</span>的<span style="letter-spacing:0.3px">Vue+Element</span>界面代码<span style="letter-spacing:0.3px">(V)</span></div>
<div style="left:350.2px;top:401.80000000000007px;height:14px;line-height:14px;font-size:10.44px;font-family:'Liberation Sans', sans-serif;color:#1a1a1a;white-space:nowrap;"><span style="letter-spacing:0.3px">ABP</span>框架<span style="letter-spacing:0.3px">Winform</span>界面生成<span style="letter-spacing:0.3px">(G)</span></div>
<div style="left:347.7px;top:419.5800000000001px;width:215.3px;height:1.0px;background:#d7d7d7;"></div>
<div style="left:350.2px;top:426.36000000000007px;height:14px;line-height:14px;font-size:10.44px;font-family:'Liberation Sans', sans-serif;color:#1a1a1a;white-space:nowrap;"><span style="letter-spacing:0.3px">Abp VNext</span>框架代码生成<span style="letter-spacing:0.3px">(N)</span></div>
<div style="left:347.7px;top:444.1400000000001px;width:215.3px;height:1.0px;background:#d7d7d7;"></div>
<div style="left:319.6px;top:446.8400000000001px;width:243.8px;height:19.76px;background:#bad8f3;border:1.5px solid #45a0f2;border-radius:2px;box-shadow:inset 0 0 0 1px #d4e8f9;"></div>
<div style="left:350.2px;top:450.9200000000001px;height:14px;line-height:14px;font-size:10.44px;font-family:'Liberation Sans', sans-serif;color:#1a1a1a;white-space:nowrap;"><span style="letter-spacing:0.3px">SqlSugar</span>框架代码生成<span style="letter-spacing:0.3px">(S)</span></div>
<div style="left:350.2px;top:470.0800000000001px;height:14px;line-height:14px;font-size:10.44px;font-family:'Liberation Sans', sans-serif;color:#1a1a1a;white-space:nowrap;"><span style="letter-spacing:0.3px">SqlSugar</span>框架<span style="letter-spacing:0.3px">Winform</span>界面生成<span style="letter-spacing:0.3px">(U)</span></div>
<div style="left:350.2px;top:489.2400000000001px;height:14px;line-height:14px;font-size:10.44px;font-family:'Liberation Sans', sans-serif;color:#1a1a1a;white-space:nowrap;"><span style="letter-spacing:0.3px">Vue3+Element</span>界面代码生成<span style="letter-spacing:0.3px">(T)</span></div>
<div style="left:350.2px;top:508.4000000000002px;height:14px;line-height:14px;font-size:10.44px;font-family:'Liberation Sans', sans-serif;color:#1a1a1a;white-space:nowrap;"><span style="letter-spacing:0.3px">SqlSugar</span>框架<span style="letter-spacing:0.3px">WPF</span>界面生成</div>
<div style="left:350.2px;top:527.5600000000002px;height:14px;line-height:14px;font-size:10.44px;font-family:'Liberation Sans', sans-serif;color:#1a1a1a;white-space:nowrap;"><span style="letter-spacing:0.3px">Python+FastApi</span>后端代码生成</div>
<div style="left:1193px;top:-1px;width:9.5px;height:697px;border:1px solid #a8a8a8;border-left:none;border-bottom:none;border-top-right-radius:8px;"></div>
</body></html>
